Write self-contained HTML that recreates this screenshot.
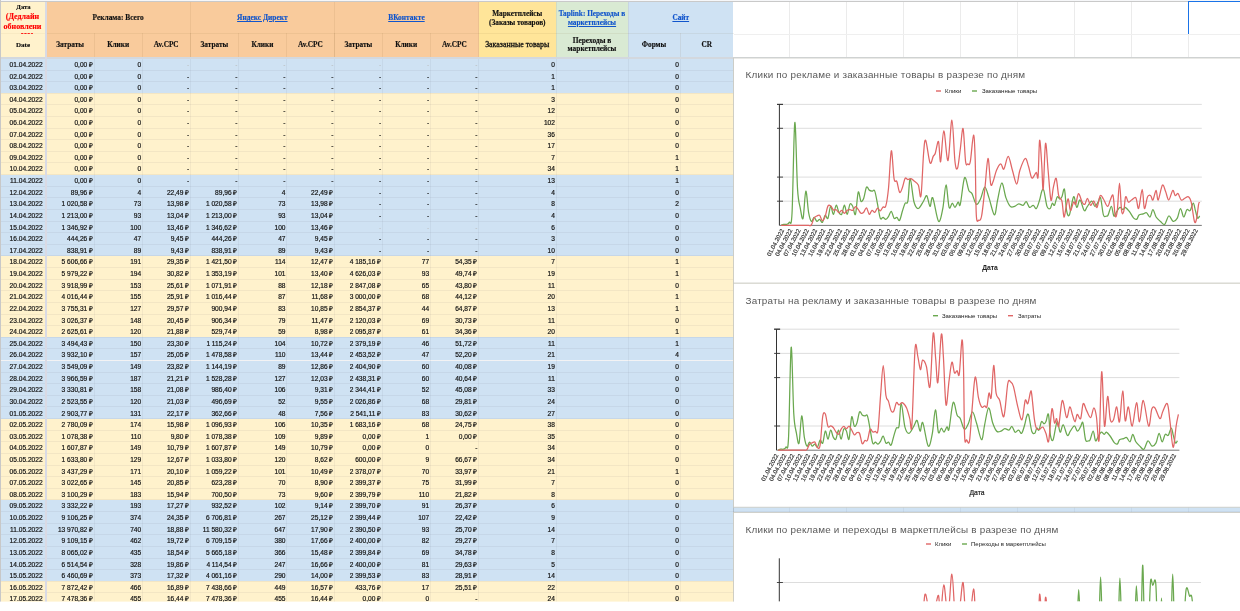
<!DOCTYPE html>
<html><head><meta charset="utf-8"><style>
html,body{margin:0;padding:0;}
body{width:1240px;height:611px;overflow:hidden;position:relative;background:#fff;font-family:'Liberation Sans',sans-serif;}
#w{position:absolute;left:0;top:0;width:1240px;height:611px;will-change:transform;}
#w>div{position:absolute;}
.t{font-family:"Liberation Sans",sans-serif;font-size:6.6px;color:#111;-webkit-text-stroke:0.18px #111;white-space:nowrap;text-align:right;line-height:8px}
</style></head><body><div id="w">
<div style="left:0.00px;top:0.00px;width:1240.00px;height:1.20px;background:#f6f7f9"></div><div style="left:0.00px;top:1.10px;width:1240.00px;height:1.00px;background:rgba(90,90,90,0.33)"></div><div style="left:1.00px;top:2.00px;width:45.00px;height:54.60px;background:#fff2cc"></div><div style="left:46.00px;top:2.00px;width:432.50px;height:54.60px;background:#f9cb9c"></div><div style="left:478.50px;top:2.00px;width:77.50px;height:54.60px;background:#ffe599"></div><div style="left:556.00px;top:2.00px;width:72.00px;height:54.60px;background:#d9ead3"></div><div style="left:628.00px;top:2.00px;width:104.80px;height:54.60px;background:#cfe2f3"></div><div style="left:93.60px;top:33.00px;width:1.00px;height:23.60px;background:rgba(120,90,40,0.09)"></div><div style="left:141.70px;top:33.00px;width:1.00px;height:23.60px;background:rgba(120,90,40,0.09)"></div><div style="left:189.80px;top:33.00px;width:1.00px;height:23.60px;background:rgba(120,90,40,0.09)"></div><div style="left:237.90px;top:33.00px;width:1.00px;height:23.60px;background:rgba(120,90,40,0.09)"></div><div style="left:286.00px;top:33.00px;width:1.00px;height:23.60px;background:rgba(120,90,40,0.09)"></div><div style="left:333.90px;top:33.00px;width:1.00px;height:23.60px;background:rgba(120,90,40,0.09)"></div><div style="left:381.70px;top:33.00px;width:1.00px;height:23.60px;background:rgba(120,90,40,0.09)"></div><div style="left:429.70px;top:33.00px;width:1.00px;height:23.60px;background:rgba(120,90,40,0.09)"></div><div style="left:189.80px;top:2.00px;width:1.00px;height:54.60px;background:rgba(120,90,40,0.09)"></div><div style="left:333.90px;top:2.00px;width:1.00px;height:54.60px;background:rgba(120,90,40,0.09)"></div><div style="left:478.00px;top:2.00px;width:1.00px;height:54.60px;background:rgba(120,90,40,0.09)"></div><div style="left:555.50px;top:2.00px;width:1.00px;height:54.60px;background:rgba(120,90,40,0.09)"></div><div style="left:627.50px;top:2.00px;width:1.00px;height:54.60px;background:rgba(120,90,40,0.09)"></div><div style="left:679.50px;top:33.00px;width:1.00px;height:23.60px;background:rgba(120,90,40,0.09)"></div><div style="left:46.00px;top:33.00px;width:687.50px;height:0.70px;background:rgba(120,90,40,0.08)"></div><div style="left:1.00px;top:33.00px;width:45.00px;height:0.70px;background:rgba(120,90,40,0.05)"></div><div style="left:788.50px;top:2.00px;width:1.00px;height:55.00px;background:#ebebeb"></div><div style="left:845.50px;top:2.00px;width:1.00px;height:55.00px;background:#ebebeb"></div><div style="left:902.50px;top:2.00px;width:1.00px;height:55.00px;background:#ebebeb"></div><div style="left:959.50px;top:2.00px;width:1.00px;height:55.00px;background:#ebebeb"></div><div style="left:1016.50px;top:2.00px;width:1.00px;height:55.00px;background:#ebebeb"></div><div style="left:1073.50px;top:2.00px;width:1.00px;height:55.00px;background:#ebebeb"></div><div style="left:1130.50px;top:2.00px;width:1.00px;height:55.00px;background:#ebebeb"></div><div style="left:1187.50px;top:2.00px;width:1.00px;height:55.00px;background:#ebebeb"></div><div style="left:733.50px;top:33.50px;width:507.00px;height:0.80px;background:#efefef"></div><div style="left:1188.00px;top:0.60px;width:60.00px;height:1.40px;background:#1a73e8"></div><div style="left:1188.00px;top:0.60px;width:1.40px;height:33.40px;background:#1a73e8"></div><div style="left:0.00px;top:56.60px;width:1240.00px;height:2.00px;background:#d3d8de"></div><div style="left:1.00px;top:58.50px;width:732.50px;height:11.50px;background:#cfe2f3"></div><div style="left:733.50px;top:58.50px;width:506.50px;height:11.50px;background:#cfe2f3"></div><div style="left:1.00px;top:70.00px;width:732.50px;height:11.62px;background:#cfe2f3"></div><div style="left:733.50px;top:70.00px;width:506.50px;height:11.62px;background:#cfe2f3"></div><div style="left:1.00px;top:81.62px;width:732.50px;height:11.62px;background:#cfe2f3"></div><div style="left:733.50px;top:81.62px;width:506.50px;height:11.62px;background:#cfe2f3"></div><div style="left:1.00px;top:93.24px;width:732.50px;height:11.62px;background:#fff2cc"></div><div style="left:733.50px;top:93.24px;width:506.50px;height:11.62px;background:#fff2cc"></div><div style="left:1.00px;top:104.86px;width:732.50px;height:11.62px;background:#fff2cc"></div><div style="left:733.50px;top:104.86px;width:506.50px;height:11.62px;background:#fff2cc"></div><div style="left:1.00px;top:116.48px;width:732.50px;height:11.62px;background:#fff2cc"></div><div style="left:733.50px;top:116.48px;width:506.50px;height:11.62px;background:#fff2cc"></div><div style="left:1.00px;top:128.10px;width:732.50px;height:11.62px;background:#fff2cc"></div><div style="left:733.50px;top:128.10px;width:506.50px;height:11.62px;background:#fff2cc"></div><div style="left:1.00px;top:139.72px;width:732.50px;height:11.62px;background:#fff2cc"></div><div style="left:733.50px;top:139.72px;width:506.50px;height:11.62px;background:#fff2cc"></div><div style="left:1.00px;top:151.34px;width:732.50px;height:11.62px;background:#fff2cc"></div><div style="left:733.50px;top:151.34px;width:506.50px;height:11.62px;background:#fff2cc"></div><div style="left:1.00px;top:162.96px;width:732.50px;height:11.62px;background:#fff2cc"></div><div style="left:733.50px;top:162.96px;width:506.50px;height:11.62px;background:#fff2cc"></div><div style="left:1.00px;top:174.58px;width:732.50px;height:11.62px;background:#cfe2f3"></div><div style="left:733.50px;top:174.58px;width:506.50px;height:11.62px;background:#cfe2f3"></div><div style="left:1.00px;top:186.20px;width:732.50px;height:11.62px;background:#cfe2f3"></div><div style="left:733.50px;top:186.20px;width:506.50px;height:11.62px;background:#cfe2f3"></div><div style="left:1.00px;top:197.82px;width:732.50px;height:11.62px;background:#cfe2f3"></div><div style="left:733.50px;top:197.82px;width:506.50px;height:11.62px;background:#cfe2f3"></div><div style="left:1.00px;top:209.44px;width:732.50px;height:11.62px;background:#cfe2f3"></div><div style="left:733.50px;top:209.44px;width:506.50px;height:11.62px;background:#cfe2f3"></div><div style="left:1.00px;top:221.06px;width:732.50px;height:11.62px;background:#cfe2f3"></div><div style="left:733.50px;top:221.06px;width:506.50px;height:11.62px;background:#cfe2f3"></div><div style="left:1.00px;top:232.68px;width:732.50px;height:11.62px;background:#cfe2f3"></div><div style="left:733.50px;top:232.68px;width:506.50px;height:11.62px;background:#cfe2f3"></div><div style="left:1.00px;top:244.30px;width:732.50px;height:11.62px;background:#cfe2f3"></div><div style="left:733.50px;top:244.30px;width:506.50px;height:11.62px;background:#cfe2f3"></div><div style="left:1.00px;top:255.92px;width:732.50px;height:11.62px;background:#fff2cc"></div><div style="left:733.50px;top:255.92px;width:506.50px;height:11.62px;background:#fff2cc"></div><div style="left:1.00px;top:267.54px;width:732.50px;height:11.62px;background:#fff2cc"></div><div style="left:733.50px;top:267.54px;width:506.50px;height:11.62px;background:#fff2cc"></div><div style="left:1.00px;top:279.16px;width:732.50px;height:11.62px;background:#fff2cc"></div><div style="left:733.50px;top:279.16px;width:506.50px;height:11.62px;background:#fff2cc"></div><div style="left:1.00px;top:290.78px;width:732.50px;height:11.62px;background:#fff2cc"></div><div style="left:733.50px;top:290.78px;width:506.50px;height:11.62px;background:#fff2cc"></div><div style="left:1.00px;top:302.40px;width:732.50px;height:11.62px;background:#fff2cc"></div><div style="left:733.50px;top:302.40px;width:506.50px;height:11.62px;background:#fff2cc"></div><div style="left:1.00px;top:314.02px;width:732.50px;height:11.62px;background:#fff2cc"></div><div style="left:733.50px;top:314.02px;width:506.50px;height:11.62px;background:#fff2cc"></div><div style="left:1.00px;top:325.64px;width:732.50px;height:11.62px;background:#fff2cc"></div><div style="left:733.50px;top:325.64px;width:506.50px;height:11.62px;background:#fff2cc"></div><div style="left:1.00px;top:337.26px;width:732.50px;height:11.62px;background:#cfe2f3"></div><div style="left:733.50px;top:337.26px;width:506.50px;height:11.62px;background:#cfe2f3"></div><div style="left:1.00px;top:348.88px;width:732.50px;height:11.62px;background:#cfe2f3"></div><div style="left:733.50px;top:348.88px;width:506.50px;height:11.62px;background:#cfe2f3"></div><div style="left:1.00px;top:360.50px;width:732.50px;height:11.62px;background:#cfe2f3"></div><div style="left:733.50px;top:360.50px;width:506.50px;height:11.62px;background:#cfe2f3"></div><div style="left:1.00px;top:372.12px;width:732.50px;height:11.62px;background:#cfe2f3"></div><div style="left:733.50px;top:372.12px;width:506.50px;height:11.62px;background:#cfe2f3"></div><div style="left:1.00px;top:383.74px;width:732.50px;height:11.62px;background:#cfe2f3"></div><div style="left:733.50px;top:383.74px;width:506.50px;height:11.62px;background:#cfe2f3"></div><div style="left:1.00px;top:395.36px;width:732.50px;height:11.62px;background:#cfe2f3"></div><div style="left:733.50px;top:395.36px;width:506.50px;height:11.62px;background:#cfe2f3"></div><div style="left:1.00px;top:406.98px;width:732.50px;height:11.62px;background:#cfe2f3"></div><div style="left:733.50px;top:406.98px;width:506.50px;height:11.62px;background:#cfe2f3"></div><div style="left:1.00px;top:418.60px;width:732.50px;height:11.62px;background:#fff2cc"></div><div style="left:733.50px;top:418.60px;width:506.50px;height:11.62px;background:#fff2cc"></div><div style="left:1.00px;top:430.22px;width:732.50px;height:11.62px;background:#fff2cc"></div><div style="left:733.50px;top:430.22px;width:506.50px;height:11.62px;background:#fff2cc"></div><div style="left:1.00px;top:441.84px;width:732.50px;height:11.62px;background:#fff2cc"></div><div style="left:733.50px;top:441.84px;width:506.50px;height:11.62px;background:#fff2cc"></div><div style="left:1.00px;top:453.46px;width:732.50px;height:11.62px;background:#fff2cc"></div><div style="left:733.50px;top:453.46px;width:506.50px;height:11.62px;background:#fff2cc"></div><div style="left:1.00px;top:465.08px;width:732.50px;height:11.62px;background:#fff2cc"></div><div style="left:733.50px;top:465.08px;width:506.50px;height:11.62px;background:#fff2cc"></div><div style="left:1.00px;top:476.70px;width:732.50px;height:11.62px;background:#fff2cc"></div><div style="left:733.50px;top:476.70px;width:506.50px;height:11.62px;background:#fff2cc"></div><div style="left:1.00px;top:488.32px;width:732.50px;height:11.62px;background:#fff2cc"></div><div style="left:733.50px;top:488.32px;width:506.50px;height:11.62px;background:#fff2cc"></div><div style="left:1.00px;top:499.94px;width:732.50px;height:11.62px;background:#cfe2f3"></div><div style="left:733.50px;top:499.94px;width:506.50px;height:11.62px;background:#cfe2f3"></div><div style="left:1.00px;top:511.56px;width:732.50px;height:11.62px;background:#cfe2f3"></div><div style="left:733.50px;top:511.56px;width:506.50px;height:11.62px;background:#cfe2f3"></div><div style="left:1.00px;top:523.18px;width:732.50px;height:11.62px;background:#cfe2f3"></div><div style="left:733.50px;top:523.18px;width:506.50px;height:11.62px;background:#cfe2f3"></div><div style="left:1.00px;top:534.80px;width:732.50px;height:11.62px;background:#cfe2f3"></div><div style="left:733.50px;top:534.80px;width:506.50px;height:11.62px;background:#cfe2f3"></div><div style="left:1.00px;top:546.42px;width:732.50px;height:11.62px;background:#cfe2f3"></div><div style="left:733.50px;top:546.42px;width:506.50px;height:11.62px;background:#cfe2f3"></div><div style="left:1.00px;top:558.04px;width:732.50px;height:11.62px;background:#cfe2f3"></div><div style="left:733.50px;top:558.04px;width:506.50px;height:11.62px;background:#cfe2f3"></div><div style="left:1.00px;top:569.66px;width:732.50px;height:11.62px;background:#cfe2f3"></div><div style="left:733.50px;top:569.66px;width:506.50px;height:11.62px;background:#cfe2f3"></div><div style="left:1.00px;top:581.28px;width:732.50px;height:11.62px;background:#fff2cc"></div><div style="left:733.50px;top:581.28px;width:506.50px;height:11.62px;background:#fff2cc"></div><div style="left:1.00px;top:592.90px;width:732.50px;height:11.62px;background:#fff2cc"></div><div style="left:733.50px;top:592.90px;width:506.50px;height:11.62px;background:#fff2cc"></div><div style="left:1.00px;top:70.00px;width:1239.00px;height:1.00px;background:rgba(60,70,80,0.062)"></div><div style="left:1.00px;top:81.00px;width:1239.00px;height:1.00px;background:rgba(60,70,80,0.062)"></div><div style="left:1.00px;top:93.00px;width:1239.00px;height:1.00px;background:rgba(60,70,80,0.062)"></div><div style="left:1.00px;top:104.00px;width:1239.00px;height:1.00px;background:rgba(60,70,80,0.062)"></div><div style="left:1.00px;top:116.00px;width:1239.00px;height:1.00px;background:rgba(60,70,80,0.062)"></div><div style="left:1.00px;top:128.00px;width:1239.00px;height:1.00px;background:rgba(60,70,80,0.062)"></div><div style="left:1.00px;top:139.00px;width:1239.00px;height:1.00px;background:rgba(60,70,80,0.062)"></div><div style="left:1.00px;top:151.00px;width:1239.00px;height:1.00px;background:rgba(60,70,80,0.062)"></div><div style="left:1.00px;top:162.00px;width:1239.00px;height:1.00px;background:rgba(60,70,80,0.062)"></div><div style="left:1.00px;top:174.00px;width:1239.00px;height:1.00px;background:rgba(60,70,80,0.062)"></div><div style="left:1.00px;top:186.00px;width:1239.00px;height:1.00px;background:rgba(60,70,80,0.062)"></div><div style="left:1.00px;top:197.00px;width:1239.00px;height:1.00px;background:rgba(60,70,80,0.062)"></div><div style="left:1.00px;top:209.00px;width:1239.00px;height:1.00px;background:rgba(60,70,80,0.062)"></div><div style="left:1.00px;top:221.00px;width:1239.00px;height:1.00px;background:rgba(60,70,80,0.062)"></div><div style="left:1.00px;top:232.00px;width:1239.00px;height:1.00px;background:rgba(60,70,80,0.062)"></div><div style="left:1.00px;top:244.00px;width:1239.00px;height:1.00px;background:rgba(60,70,80,0.062)"></div><div style="left:1.00px;top:255.00px;width:1239.00px;height:1.00px;background:rgba(60,70,80,0.062)"></div><div style="left:1.00px;top:267.00px;width:1239.00px;height:1.00px;background:rgba(60,70,80,0.062)"></div><div style="left:1.00px;top:279.00px;width:1239.00px;height:1.00px;background:rgba(60,70,80,0.062)"></div><div style="left:1.00px;top:290.00px;width:1239.00px;height:1.00px;background:rgba(60,70,80,0.062)"></div><div style="left:1.00px;top:302.00px;width:1239.00px;height:1.00px;background:rgba(60,70,80,0.062)"></div><div style="left:1.00px;top:314.00px;width:1239.00px;height:1.00px;background:rgba(60,70,80,0.062)"></div><div style="left:1.00px;top:325.00px;width:1239.00px;height:1.00px;background:rgba(60,70,80,0.062)"></div><div style="left:1.00px;top:337.00px;width:1239.00px;height:1.00px;background:rgba(60,70,80,0.062)"></div><div style="left:1.00px;top:348.00px;width:1239.00px;height:1.00px;background:rgba(60,70,80,0.062)"></div><div style="left:1.00px;top:360.00px;width:1239.00px;height:1.00px;background:rgba(60,70,80,0.062)"></div><div style="left:1.00px;top:372.00px;width:1239.00px;height:1.00px;background:rgba(60,70,80,0.062)"></div><div style="left:1.00px;top:383.00px;width:1239.00px;height:1.00px;background:rgba(60,70,80,0.062)"></div><div style="left:1.00px;top:395.00px;width:1239.00px;height:1.00px;background:rgba(60,70,80,0.062)"></div><div style="left:1.00px;top:406.00px;width:1239.00px;height:1.00px;background:rgba(60,70,80,0.062)"></div><div style="left:1.00px;top:418.00px;width:1239.00px;height:1.00px;background:rgba(60,70,80,0.062)"></div><div style="left:1.00px;top:430.00px;width:1239.00px;height:1.00px;background:rgba(60,70,80,0.062)"></div><div style="left:1.00px;top:441.00px;width:1239.00px;height:1.00px;background:rgba(60,70,80,0.062)"></div><div style="left:1.00px;top:453.00px;width:1239.00px;height:1.00px;background:rgba(60,70,80,0.062)"></div><div style="left:1.00px;top:465.00px;width:1239.00px;height:1.00px;background:rgba(60,70,80,0.062)"></div><div style="left:1.00px;top:476.00px;width:1239.00px;height:1.00px;background:rgba(60,70,80,0.062)"></div><div style="left:1.00px;top:488.00px;width:1239.00px;height:1.00px;background:rgba(60,70,80,0.062)"></div><div style="left:1.00px;top:499.00px;width:1239.00px;height:1.00px;background:rgba(60,70,80,0.062)"></div><div style="left:1.00px;top:511.00px;width:1239.00px;height:1.00px;background:rgba(60,70,80,0.062)"></div><div style="left:1.00px;top:523.00px;width:1239.00px;height:1.00px;background:rgba(60,70,80,0.062)"></div><div style="left:1.00px;top:534.00px;width:1239.00px;height:1.00px;background:rgba(60,70,80,0.062)"></div><div style="left:1.00px;top:546.00px;width:1239.00px;height:1.00px;background:rgba(60,70,80,0.062)"></div><div style="left:1.00px;top:558.00px;width:1239.00px;height:1.00px;background:rgba(60,70,80,0.062)"></div><div style="left:1.00px;top:569.00px;width:1239.00px;height:1.00px;background:rgba(60,70,80,0.062)"></div><div style="left:1.00px;top:581.00px;width:1239.00px;height:1.00px;background:rgba(60,70,80,0.062)"></div><div style="left:1.00px;top:592.00px;width:1239.00px;height:1.00px;background:rgba(60,70,80,0.062)"></div><div style="left:1.00px;top:604.00px;width:1239.00px;height:1.00px;background:rgba(60,70,80,0.062)"></div><div style="left:94.00px;top:58.50px;width:1.00px;height:543.10px;background:rgba(60,70,80,0.06)"></div><div style="left:142.00px;top:58.50px;width:1.00px;height:543.10px;background:rgba(60,70,80,0.06)"></div><div style="left:190.00px;top:58.50px;width:1.00px;height:543.10px;background:rgba(60,70,80,0.06)"></div><div style="left:238.00px;top:58.50px;width:1.00px;height:543.10px;background:rgba(60,70,80,0.06)"></div><div style="left:286.00px;top:58.50px;width:1.00px;height:543.10px;background:rgba(60,70,80,0.06)"></div><div style="left:334.00px;top:58.50px;width:1.00px;height:543.10px;background:rgba(60,70,80,0.06)"></div><div style="left:382.00px;top:58.50px;width:1.00px;height:543.10px;background:rgba(60,70,80,0.06)"></div><div style="left:430.00px;top:58.50px;width:1.00px;height:543.10px;background:rgba(60,70,80,0.06)"></div><div style="left:478.00px;top:58.50px;width:1.00px;height:543.10px;background:rgba(60,70,80,0.06)"></div><div style="left:556.00px;top:58.50px;width:1.00px;height:543.10px;background:rgba(60,70,80,0.06)"></div><div style="left:628.00px;top:58.50px;width:1.00px;height:543.10px;background:rgba(60,70,80,0.06)"></div><div style="left:680.00px;top:58.50px;width:1.00px;height:543.10px;background:rgba(60,70,80,0.06)"></div><div style="left:789.00px;top:58.50px;width:1.00px;height:543.10px;background:rgba(60,70,80,0.06)"></div><div style="left:846.00px;top:58.50px;width:1.00px;height:543.10px;background:rgba(60,70,80,0.06)"></div><div style="left:903.00px;top:58.50px;width:1.00px;height:543.10px;background:rgba(60,70,80,0.06)"></div><div style="left:960.00px;top:58.50px;width:1.00px;height:543.10px;background:rgba(60,70,80,0.06)"></div><div style="left:1017.00px;top:58.50px;width:1.00px;height:543.10px;background:rgba(60,70,80,0.06)"></div><div style="left:1074.00px;top:58.50px;width:1.00px;height:543.10px;background:rgba(60,70,80,0.06)"></div><div style="left:1131.00px;top:58.50px;width:1.00px;height:543.10px;background:rgba(60,70,80,0.06)"></div><div style="left:1188.00px;top:58.50px;width:1.00px;height:543.10px;background:rgba(60,70,80,0.06)"></div><div style="left:45.00px;top:2.00px;width:2.00px;height:599.60px;background:#d9dae4"></div><div style="left:0.00px;top:0.00px;width:1.00px;height:601.60px;background:#c8c8c8"></div><div style="left:732.80px;top:58.50px;width:1.00px;height:543.00px;background:rgba(90,90,90,0.25)"></div><div class="t" style="left:-17.40px;top:60.90px;width:60px;">01.04.2022</div><div class="t" style="left:33.10px;top:60.90px;width:60px;">0,00 ₽</div><div class="t" style="left:81.20px;top:60.90px;width:60px;">0</div><div class="t" style="left:129.30px;top:60.90px;width:60px;color:#b9b9b9;-webkit-text-stroke:0">-</div><div class="t" style="left:177.40px;top:60.90px;width:60px;color:#b9b9b9;-webkit-text-stroke:0">-</div><div class="t" style="left:225.50px;top:60.90px;width:60px;color:#b9b9b9;-webkit-text-stroke:0">-</div><div class="t" style="left:273.40px;top:60.90px;width:60px;color:#b9b9b9;-webkit-text-stroke:0">-</div><div class="t" style="left:321.20px;top:60.90px;width:60px;color:#b9b9b9;-webkit-text-stroke:0">-</div><div class="t" style="left:369.20px;top:60.90px;width:60px;color:#b9b9b9;-webkit-text-stroke:0">-</div><div class="t" style="left:417.50px;top:60.90px;width:60px;color:#b9b9b9;-webkit-text-stroke:0">-</div><div class="t" style="left:494.90px;top:60.90px;width:60px;">0</div><div class="t" style="left:619.00px;top:60.90px;width:60px;">0</div><div class="t" style="left:-17.40px;top:72.52px;width:60px;">02.04.2022</div><div class="t" style="left:33.10px;top:72.52px;width:60px;">0,00 ₽</div><div class="t" style="left:81.20px;top:72.52px;width:60px;">0</div><div class="t" style="left:129.30px;top:72.52px;width:60px;">-</div><div class="t" style="left:177.40px;top:72.52px;width:60px;">-</div><div class="t" style="left:225.50px;top:72.52px;width:60px;">-</div><div class="t" style="left:273.40px;top:72.52px;width:60px;">-</div><div class="t" style="left:321.20px;top:72.52px;width:60px;">-</div><div class="t" style="left:369.20px;top:72.52px;width:60px;">-</div><div class="t" style="left:417.50px;top:72.52px;width:60px;">-</div><div class="t" style="left:494.90px;top:72.52px;width:60px;">1</div><div class="t" style="left:619.00px;top:72.52px;width:60px;">0</div><div class="t" style="left:-17.40px;top:84.14px;width:60px;">03.04.2022</div><div class="t" style="left:33.10px;top:84.14px;width:60px;">0,00 ₽</div><div class="t" style="left:81.20px;top:84.14px;width:60px;">0</div><div class="t" style="left:129.30px;top:84.14px;width:60px;">-</div><div class="t" style="left:177.40px;top:84.14px;width:60px;">-</div><div class="t" style="left:225.50px;top:84.14px;width:60px;">-</div><div class="t" style="left:273.40px;top:84.14px;width:60px;">-</div><div class="t" style="left:321.20px;top:84.14px;width:60px;">-</div><div class="t" style="left:369.20px;top:84.14px;width:60px;">-</div><div class="t" style="left:417.50px;top:84.14px;width:60px;">-</div><div class="t" style="left:494.90px;top:84.14px;width:60px;">1</div><div class="t" style="left:619.00px;top:84.14px;width:60px;">0</div><div class="t" style="left:-17.40px;top:95.76px;width:60px;">04.04.2022</div><div class="t" style="left:33.10px;top:95.76px;width:60px;">0,00 ₽</div><div class="t" style="left:81.20px;top:95.76px;width:60px;">0</div><div class="t" style="left:129.30px;top:95.76px;width:60px;">-</div><div class="t" style="left:177.40px;top:95.76px;width:60px;">-</div><div class="t" style="left:225.50px;top:95.76px;width:60px;">-</div><div class="t" style="left:273.40px;top:95.76px;width:60px;">-</div><div class="t" style="left:321.20px;top:95.76px;width:60px;">-</div><div class="t" style="left:369.20px;top:95.76px;width:60px;">-</div><div class="t" style="left:417.50px;top:95.76px;width:60px;">-</div><div class="t" style="left:494.90px;top:95.76px;width:60px;">3</div><div class="t" style="left:619.00px;top:95.76px;width:60px;">0</div><div class="t" style="left:-17.40px;top:107.38px;width:60px;">05.04.2022</div><div class="t" style="left:33.10px;top:107.38px;width:60px;">0,00 ₽</div><div class="t" style="left:81.20px;top:107.38px;width:60px;">0</div><div class="t" style="left:129.30px;top:107.38px;width:60px;">-</div><div class="t" style="left:177.40px;top:107.38px;width:60px;">-</div><div class="t" style="left:225.50px;top:107.38px;width:60px;">-</div><div class="t" style="left:273.40px;top:107.38px;width:60px;">-</div><div class="t" style="left:321.20px;top:107.38px;width:60px;">-</div><div class="t" style="left:369.20px;top:107.38px;width:60px;">-</div><div class="t" style="left:417.50px;top:107.38px;width:60px;">-</div><div class="t" style="left:494.90px;top:107.38px;width:60px;">12</div><div class="t" style="left:619.00px;top:107.38px;width:60px;">0</div><div class="t" style="left:-17.40px;top:119.00px;width:60px;">06.04.2022</div><div class="t" style="left:33.10px;top:119.00px;width:60px;">0,00 ₽</div><div class="t" style="left:81.20px;top:119.00px;width:60px;">0</div><div class="t" style="left:129.30px;top:119.00px;width:60px;">-</div><div class="t" style="left:177.40px;top:119.00px;width:60px;">-</div><div class="t" style="left:225.50px;top:119.00px;width:60px;">-</div><div class="t" style="left:273.40px;top:119.00px;width:60px;">-</div><div class="t" style="left:321.20px;top:119.00px;width:60px;">-</div><div class="t" style="left:369.20px;top:119.00px;width:60px;">-</div><div class="t" style="left:417.50px;top:119.00px;width:60px;">-</div><div class="t" style="left:494.90px;top:119.00px;width:60px;">102</div><div class="t" style="left:619.00px;top:119.00px;width:60px;">0</div><div class="t" style="left:-17.40px;top:130.62px;width:60px;">07.04.2022</div><div class="t" style="left:33.10px;top:130.62px;width:60px;">0,00 ₽</div><div class="t" style="left:81.20px;top:130.62px;width:60px;">0</div><div class="t" style="left:129.30px;top:130.62px;width:60px;">-</div><div class="t" style="left:177.40px;top:130.62px;width:60px;">-</div><div class="t" style="left:225.50px;top:130.62px;width:60px;">-</div><div class="t" style="left:273.40px;top:130.62px;width:60px;">-</div><div class="t" style="left:321.20px;top:130.62px;width:60px;">-</div><div class="t" style="left:369.20px;top:130.62px;width:60px;">-</div><div class="t" style="left:417.50px;top:130.62px;width:60px;">-</div><div class="t" style="left:494.90px;top:130.62px;width:60px;">36</div><div class="t" style="left:619.00px;top:130.62px;width:60px;">0</div><div class="t" style="left:-17.40px;top:142.24px;width:60px;">08.04.2022</div><div class="t" style="left:33.10px;top:142.24px;width:60px;">0,00 ₽</div><div class="t" style="left:81.20px;top:142.24px;width:60px;">0</div><div class="t" style="left:129.30px;top:142.24px;width:60px;">-</div><div class="t" style="left:177.40px;top:142.24px;width:60px;">-</div><div class="t" style="left:225.50px;top:142.24px;width:60px;">-</div><div class="t" style="left:273.40px;top:142.24px;width:60px;">-</div><div class="t" style="left:321.20px;top:142.24px;width:60px;">-</div><div class="t" style="left:369.20px;top:142.24px;width:60px;">-</div><div class="t" style="left:417.50px;top:142.24px;width:60px;">-</div><div class="t" style="left:494.90px;top:142.24px;width:60px;">17</div><div class="t" style="left:619.00px;top:142.24px;width:60px;">0</div><div class="t" style="left:-17.40px;top:153.86px;width:60px;">09.04.2022</div><div class="t" style="left:33.10px;top:153.86px;width:60px;">0,00 ₽</div><div class="t" style="left:81.20px;top:153.86px;width:60px;">0</div><div class="t" style="left:129.30px;top:153.86px;width:60px;">-</div><div class="t" style="left:177.40px;top:153.86px;width:60px;">-</div><div class="t" style="left:225.50px;top:153.86px;width:60px;">-</div><div class="t" style="left:273.40px;top:153.86px;width:60px;">-</div><div class="t" style="left:321.20px;top:153.86px;width:60px;">-</div><div class="t" style="left:369.20px;top:153.86px;width:60px;">-</div><div class="t" style="left:417.50px;top:153.86px;width:60px;">-</div><div class="t" style="left:494.90px;top:153.86px;width:60px;">7</div><div class="t" style="left:619.00px;top:153.86px;width:60px;">1</div><div class="t" style="left:-17.40px;top:165.48px;width:60px;">10.04.2022</div><div class="t" style="left:33.10px;top:165.48px;width:60px;">0,00 ₽</div><div class="t" style="left:81.20px;top:165.48px;width:60px;">0</div><div class="t" style="left:129.30px;top:165.48px;width:60px;">-</div><div class="t" style="left:177.40px;top:165.48px;width:60px;">-</div><div class="t" style="left:225.50px;top:165.48px;width:60px;">-</div><div class="t" style="left:273.40px;top:165.48px;width:60px;">-</div><div class="t" style="left:321.20px;top:165.48px;width:60px;">-</div><div class="t" style="left:369.20px;top:165.48px;width:60px;">-</div><div class="t" style="left:417.50px;top:165.48px;width:60px;">-</div><div class="t" style="left:494.90px;top:165.48px;width:60px;">34</div><div class="t" style="left:619.00px;top:165.48px;width:60px;">1</div><div class="t" style="left:-17.40px;top:177.10px;width:60px;">11.04.2022</div><div class="t" style="left:33.10px;top:177.10px;width:60px;">0,00 ₽</div><div class="t" style="left:81.20px;top:177.10px;width:60px;">0</div><div class="t" style="left:129.30px;top:177.10px;width:60px;">-</div><div class="t" style="left:177.40px;top:177.10px;width:60px;">-</div><div class="t" style="left:225.50px;top:177.10px;width:60px;">-</div><div class="t" style="left:273.40px;top:177.10px;width:60px;">-</div><div class="t" style="left:321.20px;top:177.10px;width:60px;">-</div><div class="t" style="left:369.20px;top:177.10px;width:60px;">-</div><div class="t" style="left:417.50px;top:177.10px;width:60px;">-</div><div class="t" style="left:494.90px;top:177.10px;width:60px;">13</div><div class="t" style="left:619.00px;top:177.10px;width:60px;">1</div><div class="t" style="left:-17.40px;top:188.72px;width:60px;">12.04.2022</div><div class="t" style="left:33.10px;top:188.72px;width:60px;">89,96 ₽</div><div class="t" style="left:81.20px;top:188.72px;width:60px;">4</div><div class="t" style="left:129.30px;top:188.72px;width:60px;">22,49 ₽</div><div class="t" style="left:177.40px;top:188.72px;width:60px;">89,96 ₽</div><div class="t" style="left:225.50px;top:188.72px;width:60px;">4</div><div class="t" style="left:273.40px;top:188.72px;width:60px;">22,49 ₽</div><div class="t" style="left:321.20px;top:188.72px;width:60px;">-</div><div class="t" style="left:369.20px;top:188.72px;width:60px;">-</div><div class="t" style="left:417.50px;top:188.72px;width:60px;">-</div><div class="t" style="left:494.90px;top:188.72px;width:60px;">4</div><div class="t" style="left:619.00px;top:188.72px;width:60px;">0</div><div class="t" style="left:-17.40px;top:200.34px;width:60px;">13.04.2022</div><div class="t" style="left:33.10px;top:200.34px;width:60px;">1 020,58 ₽</div><div class="t" style="left:81.20px;top:200.34px;width:60px;">73</div><div class="t" style="left:129.30px;top:200.34px;width:60px;">13,98 ₽</div><div class="t" style="left:177.40px;top:200.34px;width:60px;">1 020,58 ₽</div><div class="t" style="left:225.50px;top:200.34px;width:60px;">73</div><div class="t" style="left:273.40px;top:200.34px;width:60px;">13,98 ₽</div><div class="t" style="left:321.20px;top:200.34px;width:60px;">-</div><div class="t" style="left:369.20px;top:200.34px;width:60px;">-</div><div class="t" style="left:417.50px;top:200.34px;width:60px;">-</div><div class="t" style="left:494.90px;top:200.34px;width:60px;">8</div><div class="t" style="left:619.00px;top:200.34px;width:60px;">2</div><div class="t" style="left:-17.40px;top:211.96px;width:60px;">14.04.2022</div><div class="t" style="left:33.10px;top:211.96px;width:60px;">1 213,00 ₽</div><div class="t" style="left:81.20px;top:211.96px;width:60px;">93</div><div class="t" style="left:129.30px;top:211.96px;width:60px;">13,04 ₽</div><div class="t" style="left:177.40px;top:211.96px;width:60px;">1 213,00 ₽</div><div class="t" style="left:225.50px;top:211.96px;width:60px;">93</div><div class="t" style="left:273.40px;top:211.96px;width:60px;">13,04 ₽</div><div class="t" style="left:321.20px;top:211.96px;width:60px;">-</div><div class="t" style="left:369.20px;top:211.96px;width:60px;">-</div><div class="t" style="left:417.50px;top:211.96px;width:60px;">-</div><div class="t" style="left:494.90px;top:211.96px;width:60px;">4</div><div class="t" style="left:619.00px;top:211.96px;width:60px;">0</div><div class="t" style="left:-17.40px;top:223.58px;width:60px;">15.04.2022</div><div class="t" style="left:33.10px;top:223.58px;width:60px;">1 346,92 ₽</div><div class="t" style="left:81.20px;top:223.58px;width:60px;">100</div><div class="t" style="left:129.30px;top:223.58px;width:60px;">13,46 ₽</div><div class="t" style="left:177.40px;top:223.58px;width:60px;">1 346,62 ₽</div><div class="t" style="left:225.50px;top:223.58px;width:60px;">100</div><div class="t" style="left:273.40px;top:223.58px;width:60px;">13,46 ₽</div><div class="t" style="left:321.20px;top:223.58px;width:60px;color:#b9b9b9;-webkit-text-stroke:0">-</div><div class="t" style="left:369.20px;top:223.58px;width:60px;color:#b9b9b9;-webkit-text-stroke:0">-</div><div class="t" style="left:417.50px;top:223.58px;width:60px;color:#b9b9b9;-webkit-text-stroke:0">-</div><div class="t" style="left:494.90px;top:223.58px;width:60px;">6</div><div class="t" style="left:619.00px;top:223.58px;width:60px;">0</div><div class="t" style="left:-17.40px;top:235.20px;width:60px;">16.04.2022</div><div class="t" style="left:33.10px;top:235.20px;width:60px;">444,26 ₽</div><div class="t" style="left:81.20px;top:235.20px;width:60px;">47</div><div class="t" style="left:129.30px;top:235.20px;width:60px;">9,45 ₽</div><div class="t" style="left:177.40px;top:235.20px;width:60px;">444,26 ₽</div><div class="t" style="left:225.50px;top:235.20px;width:60px;">47</div><div class="t" style="left:273.40px;top:235.20px;width:60px;">9,45 ₽</div><div class="t" style="left:321.20px;top:235.20px;width:60px;">-</div><div class="t" style="left:369.20px;top:235.20px;width:60px;">-</div><div class="t" style="left:417.50px;top:235.20px;width:60px;">-</div><div class="t" style="left:494.90px;top:235.20px;width:60px;">3</div><div class="t" style="left:619.00px;top:235.20px;width:60px;">0</div><div class="t" style="left:-17.40px;top:246.82px;width:60px;">17.04.2022</div><div class="t" style="left:33.10px;top:246.82px;width:60px;">838,91 ₽</div><div class="t" style="left:81.20px;top:246.82px;width:60px;">89</div><div class="t" style="left:129.30px;top:246.82px;width:60px;">9,43 ₽</div><div class="t" style="left:177.40px;top:246.82px;width:60px;">838,91 ₽</div><div class="t" style="left:225.50px;top:246.82px;width:60px;">89</div><div class="t" style="left:273.40px;top:246.82px;width:60px;">9,43 ₽</div><div class="t" style="left:321.20px;top:246.82px;width:60px;">-</div><div class="t" style="left:369.20px;top:246.82px;width:60px;">-</div><div class="t" style="left:417.50px;top:246.82px;width:60px;">-</div><div class="t" style="left:494.90px;top:246.82px;width:60px;">10</div><div class="t" style="left:619.00px;top:246.82px;width:60px;">0</div><div class="t" style="left:-17.40px;top:258.44px;width:60px;">18.04.2022</div><div class="t" style="left:33.10px;top:258.44px;width:60px;">5 606,66 ₽</div><div class="t" style="left:81.20px;top:258.44px;width:60px;">191</div><div class="t" style="left:129.30px;top:258.44px;width:60px;">29,35 ₽</div><div class="t" style="left:177.40px;top:258.44px;width:60px;">1 421,50 ₽</div><div class="t" style="left:225.50px;top:258.44px;width:60px;">114</div><div class="t" style="left:273.40px;top:258.44px;width:60px;">12,47 ₽</div><div class="t" style="left:321.20px;top:258.44px;width:60px;">4 185,16 ₽</div><div class="t" style="left:369.20px;top:258.44px;width:60px;">77</div><div class="t" style="left:417.50px;top:258.44px;width:60px;">54,35 ₽</div><div class="t" style="left:494.90px;top:258.44px;width:60px;">7</div><div class="t" style="left:619.00px;top:258.44px;width:60px;">1</div><div class="t" style="left:-17.40px;top:270.06px;width:60px;">19.04.2022</div><div class="t" style="left:33.10px;top:270.06px;width:60px;">5 979,22 ₽</div><div class="t" style="left:81.20px;top:270.06px;width:60px;">194</div><div class="t" style="left:129.30px;top:270.06px;width:60px;">30,82 ₽</div><div class="t" style="left:177.40px;top:270.06px;width:60px;">1 353,19 ₽</div><div class="t" style="left:225.50px;top:270.06px;width:60px;">101</div><div class="t" style="left:273.40px;top:270.06px;width:60px;">13,40 ₽</div><div class="t" style="left:321.20px;top:270.06px;width:60px;">4 626,03 ₽</div><div class="t" style="left:369.20px;top:270.06px;width:60px;">93</div><div class="t" style="left:417.50px;top:270.06px;width:60px;">49,74 ₽</div><div class="t" style="left:494.90px;top:270.06px;width:60px;">19</div><div class="t" style="left:619.00px;top:270.06px;width:60px;">1</div><div class="t" style="left:-17.40px;top:281.68px;width:60px;">20.04.2022</div><div class="t" style="left:33.10px;top:281.68px;width:60px;">3 918,99 ₽</div><div class="t" style="left:81.20px;top:281.68px;width:60px;">153</div><div class="t" style="left:129.30px;top:281.68px;width:60px;">25,61 ₽</div><div class="t" style="left:177.40px;top:281.68px;width:60px;">1 071,91 ₽</div><div class="t" style="left:225.50px;top:281.68px;width:60px;">88</div><div class="t" style="left:273.40px;top:281.68px;width:60px;">12,18 ₽</div><div class="t" style="left:321.20px;top:281.68px;width:60px;">2 847,08 ₽</div><div class="t" style="left:369.20px;top:281.68px;width:60px;">65</div><div class="t" style="left:417.50px;top:281.68px;width:60px;">43,80 ₽</div><div class="t" style="left:494.90px;top:281.68px;width:60px;">11</div><div class="t" style="left:619.00px;top:281.68px;width:60px;">0</div><div class="t" style="left:-17.40px;top:293.30px;width:60px;">21.04.2022</div><div class="t" style="left:33.10px;top:293.30px;width:60px;">4 016,44 ₽</div><div class="t" style="left:81.20px;top:293.30px;width:60px;">155</div><div class="t" style="left:129.30px;top:293.30px;width:60px;">25,91 ₽</div><div class="t" style="left:177.40px;top:293.30px;width:60px;">1 016,44 ₽</div><div class="t" style="left:225.50px;top:293.30px;width:60px;">87</div><div class="t" style="left:273.40px;top:293.30px;width:60px;">11,68 ₽</div><div class="t" style="left:321.20px;top:293.30px;width:60px;">3 000,00 ₽</div><div class="t" style="left:369.20px;top:293.30px;width:60px;">68</div><div class="t" style="left:417.50px;top:293.30px;width:60px;">44,12 ₽</div><div class="t" style="left:494.90px;top:293.30px;width:60px;">20</div><div class="t" style="left:619.00px;top:293.30px;width:60px;">1</div><div class="t" style="left:-17.40px;top:304.92px;width:60px;">22.04.2022</div><div class="t" style="left:33.10px;top:304.92px;width:60px;">3 755,31 ₽</div><div class="t" style="left:81.20px;top:304.92px;width:60px;">127</div><div class="t" style="left:129.30px;top:304.92px;width:60px;">29,57 ₽</div><div class="t" style="left:177.40px;top:304.92px;width:60px;">900,94 ₽</div><div class="t" style="left:225.50px;top:304.92px;width:60px;">83</div><div class="t" style="left:273.40px;top:304.92px;width:60px;">10,85 ₽</div><div class="t" style="left:321.20px;top:304.92px;width:60px;">2 854,37 ₽</div><div class="t" style="left:369.20px;top:304.92px;width:60px;">44</div><div class="t" style="left:417.50px;top:304.92px;width:60px;">64,87 ₽</div><div class="t" style="left:494.90px;top:304.92px;width:60px;">13</div><div class="t" style="left:619.00px;top:304.92px;width:60px;">1</div><div class="t" style="left:-17.40px;top:316.54px;width:60px;">23.04.2022</div><div class="t" style="left:33.10px;top:316.54px;width:60px;">3 026,37 ₽</div><div class="t" style="left:81.20px;top:316.54px;width:60px;">148</div><div class="t" style="left:129.30px;top:316.54px;width:60px;">20,45 ₽</div><div class="t" style="left:177.40px;top:316.54px;width:60px;">906,34 ₽</div><div class="t" style="left:225.50px;top:316.54px;width:60px;">79</div><div class="t" style="left:273.40px;top:316.54px;width:60px;">11,47 ₽</div><div class="t" style="left:321.20px;top:316.54px;width:60px;">2 120,03 ₽</div><div class="t" style="left:369.20px;top:316.54px;width:60px;">69</div><div class="t" style="left:417.50px;top:316.54px;width:60px;">30,73 ₽</div><div class="t" style="left:494.90px;top:316.54px;width:60px;">11</div><div class="t" style="left:619.00px;top:316.54px;width:60px;">0</div><div class="t" style="left:-17.40px;top:328.16px;width:60px;">24.04.2022</div><div class="t" style="left:33.10px;top:328.16px;width:60px;">2 625,61 ₽</div><div class="t" style="left:81.20px;top:328.16px;width:60px;">120</div><div class="t" style="left:129.30px;top:328.16px;width:60px;">21,88 ₽</div><div class="t" style="left:177.40px;top:328.16px;width:60px;">529,74 ₽</div><div class="t" style="left:225.50px;top:328.16px;width:60px;">59</div><div class="t" style="left:273.40px;top:328.16px;width:60px;">8,98 ₽</div><div class="t" style="left:321.20px;top:328.16px;width:60px;">2 095,87 ₽</div><div class="t" style="left:369.20px;top:328.16px;width:60px;">61</div><div class="t" style="left:417.50px;top:328.16px;width:60px;">34,36 ₽</div><div class="t" style="left:494.90px;top:328.16px;width:60px;">20</div><div class="t" style="left:619.00px;top:328.16px;width:60px;">1</div><div class="t" style="left:-17.40px;top:339.78px;width:60px;">25.04.2022</div><div class="t" style="left:33.10px;top:339.78px;width:60px;">3 494,43 ₽</div><div class="t" style="left:81.20px;top:339.78px;width:60px;">150</div><div class="t" style="left:129.30px;top:339.78px;width:60px;">23,30 ₽</div><div class="t" style="left:177.40px;top:339.78px;width:60px;">1 115,24 ₽</div><div class="t" style="left:225.50px;top:339.78px;width:60px;">104</div><div class="t" style="left:273.40px;top:339.78px;width:60px;">10,72 ₽</div><div class="t" style="left:321.20px;top:339.78px;width:60px;">2 379,19 ₽</div><div class="t" style="left:369.20px;top:339.78px;width:60px;">46</div><div class="t" style="left:417.50px;top:339.78px;width:60px;">51,72 ₽</div><div class="t" style="left:494.90px;top:339.78px;width:60px;">11</div><div class="t" style="left:619.00px;top:339.78px;width:60px;">1</div><div class="t" style="left:-17.40px;top:351.40px;width:60px;">26.04.2022</div><div class="t" style="left:33.10px;top:351.40px;width:60px;">3 932,10 ₽</div><div class="t" style="left:81.20px;top:351.40px;width:60px;">157</div><div class="t" style="left:129.30px;top:351.40px;width:60px;">25,05 ₽</div><div class="t" style="left:177.40px;top:351.40px;width:60px;">1 478,58 ₽</div><div class="t" style="left:225.50px;top:351.40px;width:60px;">110</div><div class="t" style="left:273.40px;top:351.40px;width:60px;">13,44 ₽</div><div class="t" style="left:321.20px;top:351.40px;width:60px;">2 453,52 ₽</div><div class="t" style="left:369.20px;top:351.40px;width:60px;">47</div><div class="t" style="left:417.50px;top:351.40px;width:60px;">52,20 ₽</div><div class="t" style="left:494.90px;top:351.40px;width:60px;">21</div><div class="t" style="left:619.00px;top:351.40px;width:60px;">4</div><div class="t" style="left:-17.40px;top:363.02px;width:60px;">27.04.2022</div><div class="t" style="left:33.10px;top:363.02px;width:60px;">3 549,09 ₽</div><div class="t" style="left:81.20px;top:363.02px;width:60px;">149</div><div class="t" style="left:129.30px;top:363.02px;width:60px;">23,82 ₽</div><div class="t" style="left:177.40px;top:363.02px;width:60px;">1 144,19 ₽</div><div class="t" style="left:225.50px;top:363.02px;width:60px;">89</div><div class="t" style="left:273.40px;top:363.02px;width:60px;">12,86 ₽</div><div class="t" style="left:321.20px;top:363.02px;width:60px;">2 404,90 ₽</div><div class="t" style="left:369.20px;top:363.02px;width:60px;">60</div><div class="t" style="left:417.50px;top:363.02px;width:60px;">40,08 ₽</div><div class="t" style="left:494.90px;top:363.02px;width:60px;">19</div><div class="t" style="left:619.00px;top:363.02px;width:60px;">0</div><div class="t" style="left:-17.40px;top:374.64px;width:60px;">28.04.2022</div><div class="t" style="left:33.10px;top:374.64px;width:60px;">3 966,59 ₽</div><div class="t" style="left:81.20px;top:374.64px;width:60px;">187</div><div class="t" style="left:129.30px;top:374.64px;width:60px;">21,21 ₽</div><div class="t" style="left:177.40px;top:374.64px;width:60px;">1 528,28 ₽</div><div class="t" style="left:225.50px;top:374.64px;width:60px;">127</div><div class="t" style="left:273.40px;top:374.64px;width:60px;">12,03 ₽</div><div class="t" style="left:321.20px;top:374.64px;width:60px;">2 438,31 ₽</div><div class="t" style="left:369.20px;top:374.64px;width:60px;">60</div><div class="t" style="left:417.50px;top:374.64px;width:60px;">40,64 ₽</div><div class="t" style="left:494.90px;top:374.64px;width:60px;">11</div><div class="t" style="left:619.00px;top:374.64px;width:60px;">0</div><div class="t" style="left:-17.40px;top:386.26px;width:60px;">29.04.2022</div><div class="t" style="left:33.10px;top:386.26px;width:60px;">3 330,81 ₽</div><div class="t" style="left:81.20px;top:386.26px;width:60px;">158</div><div class="t" style="left:129.30px;top:386.26px;width:60px;">21,08 ₽</div><div class="t" style="left:177.40px;top:386.26px;width:60px;">986,40 ₽</div><div class="t" style="left:225.50px;top:386.26px;width:60px;">106</div><div class="t" style="left:273.40px;top:386.26px;width:60px;">9,31 ₽</div><div class="t" style="left:321.20px;top:386.26px;width:60px;">2 344,41 ₽</div><div class="t" style="left:369.20px;top:386.26px;width:60px;">52</div><div class="t" style="left:417.50px;top:386.26px;width:60px;">45,08 ₽</div><div class="t" style="left:494.90px;top:386.26px;width:60px;">33</div><div class="t" style="left:619.00px;top:386.26px;width:60px;">0</div><div class="t" style="left:-17.40px;top:397.88px;width:60px;">30.04.2022</div><div class="t" style="left:33.10px;top:397.88px;width:60px;">2 523,55 ₽</div><div class="t" style="left:81.20px;top:397.88px;width:60px;">120</div><div class="t" style="left:129.30px;top:397.88px;width:60px;">21,03 ₽</div><div class="t" style="left:177.40px;top:397.88px;width:60px;">496,69 ₽</div><div class="t" style="left:225.50px;top:397.88px;width:60px;">52</div><div class="t" style="left:273.40px;top:397.88px;width:60px;">9,55 ₽</div><div class="t" style="left:321.20px;top:397.88px;width:60px;">2 026,86 ₽</div><div class="t" style="left:369.20px;top:397.88px;width:60px;">68</div><div class="t" style="left:417.50px;top:397.88px;width:60px;">29,81 ₽</div><div class="t" style="left:494.90px;top:397.88px;width:60px;">24</div><div class="t" style="left:619.00px;top:397.88px;width:60px;">0</div><div class="t" style="left:-17.40px;top:409.50px;width:60px;">01.05.2022</div><div class="t" style="left:33.10px;top:409.50px;width:60px;">2 903,77 ₽</div><div class="t" style="left:81.20px;top:409.50px;width:60px;">131</div><div class="t" style="left:129.30px;top:409.50px;width:60px;">22,17 ₽</div><div class="t" style="left:177.40px;top:409.50px;width:60px;">362,66 ₽</div><div class="t" style="left:225.50px;top:409.50px;width:60px;">48</div><div class="t" style="left:273.40px;top:409.50px;width:60px;">7,56 ₽</div><div class="t" style="left:321.20px;top:409.50px;width:60px;">2 541,11 ₽</div><div class="t" style="left:369.20px;top:409.50px;width:60px;">83</div><div class="t" style="left:417.50px;top:409.50px;width:60px;">30,62 ₽</div><div class="t" style="left:494.90px;top:409.50px;width:60px;">27</div><div class="t" style="left:619.00px;top:409.50px;width:60px;">0</div><div class="t" style="left:-17.40px;top:421.12px;width:60px;">02.05.2022</div><div class="t" style="left:33.10px;top:421.12px;width:60px;">2 780,09 ₽</div><div class="t" style="left:81.20px;top:421.12px;width:60px;">174</div><div class="t" style="left:129.30px;top:421.12px;width:60px;">15,98 ₽</div><div class="t" style="left:177.40px;top:421.12px;width:60px;">1 096,93 ₽</div><div class="t" style="left:225.50px;top:421.12px;width:60px;">106</div><div class="t" style="left:273.40px;top:421.12px;width:60px;">10,35 ₽</div><div class="t" style="left:321.20px;top:421.12px;width:60px;">1 683,16 ₽</div><div class="t" style="left:369.20px;top:421.12px;width:60px;">68</div><div class="t" style="left:417.50px;top:421.12px;width:60px;">24,75 ₽</div><div class="t" style="left:494.90px;top:421.12px;width:60px;">38</div><div class="t" style="left:619.00px;top:421.12px;width:60px;">0</div><div class="t" style="left:-17.40px;top:432.74px;width:60px;">03.05.2022</div><div class="t" style="left:33.10px;top:432.74px;width:60px;">1 078,38 ₽</div><div class="t" style="left:81.20px;top:432.74px;width:60px;">110</div><div class="t" style="left:129.30px;top:432.74px;width:60px;">9,80 ₽</div><div class="t" style="left:177.40px;top:432.74px;width:60px;">1 078,38 ₽</div><div class="t" style="left:225.50px;top:432.74px;width:60px;">109</div><div class="t" style="left:273.40px;top:432.74px;width:60px;">9,89 ₽</div><div class="t" style="left:321.20px;top:432.74px;width:60px;">0,00 ₽</div><div class="t" style="left:369.20px;top:432.74px;width:60px;">1</div><div class="t" style="left:417.50px;top:432.74px;width:60px;">0,00 ₽</div><div class="t" style="left:494.90px;top:432.74px;width:60px;">35</div><div class="t" style="left:619.00px;top:432.74px;width:60px;">0</div><div class="t" style="left:-17.40px;top:444.36px;width:60px;">04.05.2022</div><div class="t" style="left:33.10px;top:444.36px;width:60px;">1 607,87 ₽</div><div class="t" style="left:81.20px;top:444.36px;width:60px;">149</div><div class="t" style="left:129.30px;top:444.36px;width:60px;">10,79 ₽</div><div class="t" style="left:177.40px;top:444.36px;width:60px;">1 607,87 ₽</div><div class="t" style="left:225.50px;top:444.36px;width:60px;">149</div><div class="t" style="left:273.40px;top:444.36px;width:60px;">10,79 ₽</div><div class="t" style="left:321.20px;top:444.36px;width:60px;">0,00 ₽</div><div class="t" style="left:369.20px;top:444.36px;width:60px;">0</div><div class="t" style="left:417.50px;top:444.36px;width:60px;">-</div><div class="t" style="left:494.90px;top:444.36px;width:60px;">34</div><div class="t" style="left:619.00px;top:444.36px;width:60px;">0</div><div class="t" style="left:-17.40px;top:455.98px;width:60px;">05.05.2022</div><div class="t" style="left:33.10px;top:455.98px;width:60px;">1 633,80 ₽</div><div class="t" style="left:81.20px;top:455.98px;width:60px;">129</div><div class="t" style="left:129.30px;top:455.98px;width:60px;">12,67 ₽</div><div class="t" style="left:177.40px;top:455.98px;width:60px;">1 033,80 ₽</div><div class="t" style="left:225.50px;top:455.98px;width:60px;">120</div><div class="t" style="left:273.40px;top:455.98px;width:60px;">8,62 ₽</div><div class="t" style="left:321.20px;top:455.98px;width:60px;">600,00 ₽</div><div class="t" style="left:369.20px;top:455.98px;width:60px;">9</div><div class="t" style="left:417.50px;top:455.98px;width:60px;">66,67 ₽</div><div class="t" style="left:494.90px;top:455.98px;width:60px;">34</div><div class="t" style="left:619.00px;top:455.98px;width:60px;">0</div><div class="t" style="left:-17.40px;top:467.60px;width:60px;">06.05.2022</div><div class="t" style="left:33.10px;top:467.60px;width:60px;">3 437,29 ₽</div><div class="t" style="left:81.20px;top:467.60px;width:60px;">171</div><div class="t" style="left:129.30px;top:467.60px;width:60px;">20,10 ₽</div><div class="t" style="left:177.40px;top:467.60px;width:60px;">1 059,22 ₽</div><div class="t" style="left:225.50px;top:467.60px;width:60px;">101</div><div class="t" style="left:273.40px;top:467.60px;width:60px;">10,49 ₽</div><div class="t" style="left:321.20px;top:467.60px;width:60px;">2 378,07 ₽</div><div class="t" style="left:369.20px;top:467.60px;width:60px;">70</div><div class="t" style="left:417.50px;top:467.60px;width:60px;">33,97 ₽</div><div class="t" style="left:494.90px;top:467.60px;width:60px;">21</div><div class="t" style="left:619.00px;top:467.60px;width:60px;">1</div><div class="t" style="left:-17.40px;top:479.22px;width:60px;">07.05.2022</div><div class="t" style="left:33.10px;top:479.22px;width:60px;">3 022,65 ₽</div><div class="t" style="left:81.20px;top:479.22px;width:60px;">145</div><div class="t" style="left:129.30px;top:479.22px;width:60px;">20,85 ₽</div><div class="t" style="left:177.40px;top:479.22px;width:60px;">623,28 ₽</div><div class="t" style="left:225.50px;top:479.22px;width:60px;">70</div><div class="t" style="left:273.40px;top:479.22px;width:60px;">8,90 ₽</div><div class="t" style="left:321.20px;top:479.22px;width:60px;">2 399,37 ₽</div><div class="t" style="left:369.20px;top:479.22px;width:60px;">75</div><div class="t" style="left:417.50px;top:479.22px;width:60px;">31,99 ₽</div><div class="t" style="left:494.90px;top:479.22px;width:60px;">7</div><div class="t" style="left:619.00px;top:479.22px;width:60px;">0</div><div class="t" style="left:-17.40px;top:490.84px;width:60px;">08.05.2022</div><div class="t" style="left:33.10px;top:490.84px;width:60px;">3 100,29 ₽</div><div class="t" style="left:81.20px;top:490.84px;width:60px;">183</div><div class="t" style="left:129.30px;top:490.84px;width:60px;">15,94 ₽</div><div class="t" style="left:177.40px;top:490.84px;width:60px;">700,50 ₽</div><div class="t" style="left:225.50px;top:490.84px;width:60px;">73</div><div class="t" style="left:273.40px;top:490.84px;width:60px;">9,60 ₽</div><div class="t" style="left:321.20px;top:490.84px;width:60px;">2 399,79 ₽</div><div class="t" style="left:369.20px;top:490.84px;width:60px;">110</div><div class="t" style="left:417.50px;top:490.84px;width:60px;">21,82 ₽</div><div class="t" style="left:494.90px;top:490.84px;width:60px;">8</div><div class="t" style="left:619.00px;top:490.84px;width:60px;">0</div><div class="t" style="left:-17.40px;top:502.46px;width:60px;">09.05.2022</div><div class="t" style="left:33.10px;top:502.46px;width:60px;">3 332,22 ₽</div><div class="t" style="left:81.20px;top:502.46px;width:60px;">193</div><div class="t" style="left:129.30px;top:502.46px;width:60px;">17,27 ₽</div><div class="t" style="left:177.40px;top:502.46px;width:60px;">932,52 ₽</div><div class="t" style="left:225.50px;top:502.46px;width:60px;">102</div><div class="t" style="left:273.40px;top:502.46px;width:60px;">9,14 ₽</div><div class="t" style="left:321.20px;top:502.46px;width:60px;">2 399,70 ₽</div><div class="t" style="left:369.20px;top:502.46px;width:60px;">91</div><div class="t" style="left:417.50px;top:502.46px;width:60px;">26,37 ₽</div><div class="t" style="left:494.90px;top:502.46px;width:60px;">6</div><div class="t" style="left:619.00px;top:502.46px;width:60px;">0</div><div class="t" style="left:-17.40px;top:514.08px;width:60px;">10.05.2022</div><div class="t" style="left:33.10px;top:514.08px;width:60px;">9 106,25 ₽</div><div class="t" style="left:81.20px;top:514.08px;width:60px;">374</div><div class="t" style="left:129.30px;top:514.08px;width:60px;">24,35 ₽</div><div class="t" style="left:177.40px;top:514.08px;width:60px;">6 706,81 ₽</div><div class="t" style="left:225.50px;top:514.08px;width:60px;">267</div><div class="t" style="left:273.40px;top:514.08px;width:60px;">25,12 ₽</div><div class="t" style="left:321.20px;top:514.08px;width:60px;">2 399,44 ₽</div><div class="t" style="left:369.20px;top:514.08px;width:60px;">107</div><div class="t" style="left:417.50px;top:514.08px;width:60px;">22,42 ₽</div><div class="t" style="left:494.90px;top:514.08px;width:60px;">9</div><div class="t" style="left:619.00px;top:514.08px;width:60px;">0</div><div class="t" style="left:-17.40px;top:525.70px;width:60px;">11.05.2022</div><div class="t" style="left:33.10px;top:525.70px;width:60px;">13 970,82 ₽</div><div class="t" style="left:81.20px;top:525.70px;width:60px;">740</div><div class="t" style="left:129.30px;top:525.70px;width:60px;">18,88 ₽</div><div class="t" style="left:177.40px;top:525.70px;width:60px;">11 580,32 ₽</div><div class="t" style="left:225.50px;top:525.70px;width:60px;">647</div><div class="t" style="left:273.40px;top:525.70px;width:60px;">17,90 ₽</div><div class="t" style="left:321.20px;top:525.70px;width:60px;">2 390,50 ₽</div><div class="t" style="left:369.20px;top:525.70px;width:60px;">93</div><div class="t" style="left:417.50px;top:525.70px;width:60px;">25,70 ₽</div><div class="t" style="left:494.90px;top:525.70px;width:60px;">14</div><div class="t" style="left:619.00px;top:525.70px;width:60px;">0</div><div class="t" style="left:-17.40px;top:537.32px;width:60px;">12.05.2022</div><div class="t" style="left:33.10px;top:537.32px;width:60px;">9 109,15 ₽</div><div class="t" style="left:81.20px;top:537.32px;width:60px;">462</div><div class="t" style="left:129.30px;top:537.32px;width:60px;">19,72 ₽</div><div class="t" style="left:177.40px;top:537.32px;width:60px;">6 709,15 ₽</div><div class="t" style="left:225.50px;top:537.32px;width:60px;">380</div><div class="t" style="left:273.40px;top:537.32px;width:60px;">17,66 ₽</div><div class="t" style="left:321.20px;top:537.32px;width:60px;">2 400,00 ₽</div><div class="t" style="left:369.20px;top:537.32px;width:60px;">82</div><div class="t" style="left:417.50px;top:537.32px;width:60px;">29,27 ₽</div><div class="t" style="left:494.90px;top:537.32px;width:60px;">7</div><div class="t" style="left:619.00px;top:537.32px;width:60px;">0</div><div class="t" style="left:-17.40px;top:548.94px;width:60px;">13.05.2022</div><div class="t" style="left:33.10px;top:548.94px;width:60px;">8 065,02 ₽</div><div class="t" style="left:81.20px;top:548.94px;width:60px;">435</div><div class="t" style="left:129.30px;top:548.94px;width:60px;">18,54 ₽</div><div class="t" style="left:177.40px;top:548.94px;width:60px;">5 665,18 ₽</div><div class="t" style="left:225.50px;top:548.94px;width:60px;">366</div><div class="t" style="left:273.40px;top:548.94px;width:60px;">15,48 ₽</div><div class="t" style="left:321.20px;top:548.94px;width:60px;">2 399,84 ₽</div><div class="t" style="left:369.20px;top:548.94px;width:60px;">69</div><div class="t" style="left:417.50px;top:548.94px;width:60px;">34,78 ₽</div><div class="t" style="left:494.90px;top:548.94px;width:60px;">8</div><div class="t" style="left:619.00px;top:548.94px;width:60px;">0</div><div class="t" style="left:-17.40px;top:560.56px;width:60px;">14.05.2022</div><div class="t" style="left:33.10px;top:560.56px;width:60px;">6 514,54 ₽</div><div class="t" style="left:81.20px;top:560.56px;width:60px;">328</div><div class="t" style="left:129.30px;top:560.56px;width:60px;">19,86 ₽</div><div class="t" style="left:177.40px;top:560.56px;width:60px;">4 114,54 ₽</div><div class="t" style="left:225.50px;top:560.56px;width:60px;">247</div><div class="t" style="left:273.40px;top:560.56px;width:60px;">16,66 ₽</div><div class="t" style="left:321.20px;top:560.56px;width:60px;">2 400,00 ₽</div><div class="t" style="left:369.20px;top:560.56px;width:60px;">81</div><div class="t" style="left:417.50px;top:560.56px;width:60px;">29,63 ₽</div><div class="t" style="left:494.90px;top:560.56px;width:60px;">5</div><div class="t" style="left:619.00px;top:560.56px;width:60px;">0</div><div class="t" style="left:-17.40px;top:572.18px;width:60px;">15.05.2022</div><div class="t" style="left:33.10px;top:572.18px;width:60px;">6 460,69 ₽</div><div class="t" style="left:81.20px;top:572.18px;width:60px;">373</div><div class="t" style="left:129.30px;top:572.18px;width:60px;">17,32 ₽</div><div class="t" style="left:177.40px;top:572.18px;width:60px;">4 061,16 ₽</div><div class="t" style="left:225.50px;top:572.18px;width:60px;">290</div><div class="t" style="left:273.40px;top:572.18px;width:60px;">14,00 ₽</div><div class="t" style="left:321.20px;top:572.18px;width:60px;">2 399,53 ₽</div><div class="t" style="left:369.20px;top:572.18px;width:60px;">83</div><div class="t" style="left:417.50px;top:572.18px;width:60px;">28,91 ₽</div><div class="t" style="left:494.90px;top:572.18px;width:60px;">14</div><div class="t" style="left:619.00px;top:572.18px;width:60px;">0</div><div class="t" style="left:-17.40px;top:583.80px;width:60px;">16.05.2022</div><div class="t" style="left:33.10px;top:583.80px;width:60px;">7 872,42 ₽</div><div class="t" style="left:81.20px;top:583.80px;width:60px;">466</div><div class="t" style="left:129.30px;top:583.80px;width:60px;">16,89 ₽</div><div class="t" style="left:177.40px;top:583.80px;width:60px;">7 438,66 ₽</div><div class="t" style="left:225.50px;top:583.80px;width:60px;">449</div><div class="t" style="left:273.40px;top:583.80px;width:60px;">16,57 ₽</div><div class="t" style="left:321.20px;top:583.80px;width:60px;">433,76 ₽</div><div class="t" style="left:369.20px;top:583.80px;width:60px;">17</div><div class="t" style="left:417.50px;top:583.80px;width:60px;">25,51 ₽</div><div class="t" style="left:494.90px;top:583.80px;width:60px;">22</div><div class="t" style="left:619.00px;top:583.80px;width:60px;">0</div><div class="t" style="left:-17.40px;top:595.42px;width:60px;">17.05.2022</div><div class="t" style="left:33.10px;top:595.42px;width:60px;">7 478,36 ₽</div><div class="t" style="left:81.20px;top:595.42px;width:60px;">455</div><div class="t" style="left:129.30px;top:595.42px;width:60px;">16,44 ₽</div><div class="t" style="left:177.40px;top:595.42px;width:60px;">7 478,36 ₽</div><div class="t" style="left:225.50px;top:595.42px;width:60px;">455</div><div class="t" style="left:273.40px;top:595.42px;width:60px;">16,44 ₽</div><div class="t" style="left:321.20px;top:595.42px;width:60px;">0,00 ₽</div><div class="t" style="left:369.20px;top:595.42px;width:60px;">0</div><div class="t" style="left:417.50px;top:595.42px;width:60px;">-</div><div class="t" style="left:494.90px;top:595.42px;width:60px;">24</div><div class="t" style="left:619.00px;top:595.42px;width:60px;">0</div><div style="left:1.00px;top:3.40px;width:45.00px;font-family:'Liberation Serif',serif;font-weight:bold;color:#111;text-align:center;white-space:nowrap;-webkit-text-stroke:0.15px currentColor;font-size:6.6px;line-height:7.26px;">Дата</div><div style="left:0.00px;top:12.30px;width:45.00px;font-family:'Liberation Serif',serif;font-weight:bold;color:#111;text-align:center;white-space:nowrap;-webkit-text-stroke:0.15px currentColor;font-size:8.0px;line-height:9.4px;color:#ff0000">(Дедлайн<br>обновлени</div><div style="left:5.00px;top:31.00px;width:45.00px;font-family:'Liberation Serif',serif;font-weight:bold;color:#111;text-align:center;white-space:nowrap;-webkit-text-stroke:0.15px currentColor;font-size:7.3px;line-height:6px;color:#ff0000;letter-spacing:0.8px">----</div><div style="left:0.50px;top:41.60px;width:45.00px;font-family:'Liberation Serif',serif;font-weight:bold;color:#111;text-align:center;white-space:nowrap;-webkit-text-stroke:0.15px currentColor;font-size:7.0px;line-height:7.700000000000001px;">Date</div><div style="left:46.00px;top:13.80px;width:144.30px;font-family:'Liberation Serif',serif;font-weight:bold;color:#111;text-align:center;white-space:nowrap;-webkit-text-stroke:0.15px currentColor;font-size:7.4px;line-height:8.14px;">Реклама: Всего</div><div style="left:190.30px;top:13.80px;width:144.10px;font-family:'Liberation Serif',serif;font-weight:bold;color:#111;text-align:center;white-space:nowrap;-webkit-text-stroke:0.15px currentColor;font-size:7.4px;line-height:8.14px;color:#1155cc"><u>Яндекс Директ</u></div><div style="left:334.40px;top:13.80px;width:144.10px;font-family:'Liberation Serif',serif;font-weight:bold;color:#111;text-align:center;white-space:nowrap;-webkit-text-stroke:0.15px currentColor;font-size:7.4px;line-height:8.14px;color:#1155cc"><u>ВКонтакте</u></div><div style="left:478.50px;top:8.80px;width:77.50px;font-family:'Liberation Serif',serif;font-weight:bold;color:#111;text-align:center;white-space:nowrap;-webkit-text-stroke:0.15px currentColor;font-size:7.3px;line-height:9.0px;">Маркетплейсы<br>(Заказы товаров)</div><div style="left:556.00px;top:8.80px;width:72.00px;font-family:'Liberation Serif',serif;font-weight:bold;color:#111;text-align:center;white-space:nowrap;-webkit-text-stroke:0.15px currentColor;font-size:7.3px;line-height:9.0px;color:#1155cc">Taplink: Переходы в<br><u>маркетплейсы</u></div><div style="left:628.00px;top:14.20px;width:105.50px;font-family:'Liberation Serif',serif;font-weight:bold;color:#111;text-align:center;white-space:nowrap;-webkit-text-stroke:0.15px currentColor;font-size:7.3px;line-height:8.030000000000001px;color:#1155cc"><u>Сайт</u></div><div style="left:46.00px;top:40.80px;width:48.10px;font-family:'Liberation Serif',serif;font-weight:bold;color:#111;text-align:center;white-space:nowrap;-webkit-text-stroke:0.15px currentColor;font-size:7.3px;line-height:8.030000000000001px;">Затраты</div><div style="left:94.10px;top:40.80px;width:48.10px;font-family:'Liberation Serif',serif;font-weight:bold;color:#111;text-align:center;white-space:nowrap;-webkit-text-stroke:0.15px currentColor;font-size:7.3px;line-height:8.030000000000001px;">Клики</div><div style="left:142.20px;top:40.80px;width:48.10px;font-family:'Liberation Serif',serif;font-weight:bold;color:#111;text-align:center;white-space:nowrap;-webkit-text-stroke:0.15px currentColor;font-size:7.3px;line-height:8.030000000000001px;">Av.CPC</div><div style="left:190.30px;top:40.80px;width:48.10px;font-family:'Liberation Serif',serif;font-weight:bold;color:#111;text-align:center;white-space:nowrap;-webkit-text-stroke:0.15px currentColor;font-size:7.3px;line-height:8.030000000000001px;">Затраты</div><div style="left:238.40px;top:40.80px;width:48.10px;font-family:'Liberation Serif',serif;font-weight:bold;color:#111;text-align:center;white-space:nowrap;-webkit-text-stroke:0.15px currentColor;font-size:7.3px;line-height:8.030000000000001px;">Клики</div><div style="left:286.50px;top:40.80px;width:47.90px;font-family:'Liberation Serif',serif;font-weight:bold;color:#111;text-align:center;white-space:nowrap;-webkit-text-stroke:0.15px currentColor;font-size:7.3px;line-height:8.030000000000001px;">Av.CPC</div><div style="left:334.40px;top:40.80px;width:47.80px;font-family:'Liberation Serif',serif;font-weight:bold;color:#111;text-align:center;white-space:nowrap;-webkit-text-stroke:0.15px currentColor;font-size:7.3px;line-height:8.030000000000001px;">Затраты</div><div style="left:382.20px;top:40.80px;width:48.00px;font-family:'Liberation Serif',serif;font-weight:bold;color:#111;text-align:center;white-space:nowrap;-webkit-text-stroke:0.15px currentColor;font-size:7.3px;line-height:8.030000000000001px;">Клики</div><div style="left:430.20px;top:40.80px;width:48.30px;font-family:'Liberation Serif',serif;font-weight:bold;color:#111;text-align:center;white-space:nowrap;-webkit-text-stroke:0.15px currentColor;font-size:7.3px;line-height:8.030000000000001px;">Av.CPC</div><div style="left:478.50px;top:40.60px;width:77.50px;font-family:'Liberation Serif',serif;font-weight:bold;color:#111;text-align:center;white-space:nowrap;-webkit-text-stroke:0.15px currentColor;font-size:7.9px;line-height:8.690000000000001px;font-weight:normal;-webkit-text-stroke:0.3px #111">Заказанные товары</div><div style="left:556.00px;top:36.60px;width:72.00px;font-family:'Liberation Serif',serif;font-weight:bold;color:#111;text-align:center;white-space:nowrap;-webkit-text-stroke:0.15px currentColor;font-size:7.4px;line-height:8.6px;">Переходы в<br>маркетплейсы</div><div style="left:628.00px;top:40.80px;width:52.00px;font-family:'Liberation Serif',serif;font-weight:bold;color:#111;text-align:center;white-space:nowrap;-webkit-text-stroke:0.15px currentColor;font-size:7.3px;line-height:8.030000000000001px;">Формы</div><div style="left:680.00px;top:40.80px;width:53.50px;font-family:'Liberation Serif',serif;font-weight:bold;color:#111;text-align:center;white-space:nowrap;-webkit-text-stroke:0.15px currentColor;font-size:7.3px;line-height:8.030000000000001px;">CR</div><svg style="position:absolute;left:0;top:0;will-change:transform" width="1240" height="611"><defs><clipPath id="c3"><rect x="733" y="512.5" width="510" height="89.1"/></clipPath></defs><rect x="733.5" y="58" width="510" height="225.2" fill="#fff" stroke="#c9c9c0" stroke-width="0.8"/><rect x="733.5" y="283.2" width="510" height="224.0" fill="#fff" stroke="#c9c9c0" stroke-width="0.8"/><rect x="733.5" y="512.5" width="510" height="127.5" fill="#fff" stroke="#c9c9c0" stroke-width="0.8"/><text x="745.5" y="78.2" font-size="9.9" letter-spacing="0.2" fill="#595959" style="font-family:'Liberation Sans',sans-serif">Клики по рекламе и заказанные товары в разрезе по дням</text><line x1="779.4" y1="104.4" x2="1201.8" y2="104.4" stroke="#d9d9d9" stroke-width="0.9"/><line x1="777.0" y1="104.4" x2="783.0" y2="104.4" stroke="#333" stroke-width="0.9"/><line x1="779.4" y1="128.3" x2="1201.8" y2="128.3" stroke="#d9d9d9" stroke-width="0.9"/><line x1="777.0" y1="128.3" x2="783.0" y2="128.3" stroke="#333" stroke-width="0.9"/><line x1="779.4" y1="177.1" x2="1201.8" y2="177.1" stroke="#d9d9d9" stroke-width="0.9"/><line x1="777.0" y1="177.1" x2="783.0" y2="177.1" stroke="#333" stroke-width="0.9"/><line x1="779.4" y1="201.2" x2="1201.8" y2="201.2" stroke="#d9d9d9" stroke-width="0.9"/><line x1="777.0" y1="201.2" x2="783.0" y2="201.2" stroke="#333" stroke-width="0.9"/><line x1="777.0" y1="104.4" x2="783.0" y2="104.4" stroke="#333" stroke-width="0.9"/><line x1="779.4" y1="225.4" x2="1201.8" y2="225.4" stroke="#666" stroke-width="0.9"/><line x1="779.4" y1="104.4" x2="779.4" y2="225.4" stroke="#333" stroke-width="1"/><path d="M781.00,225.40C781.46,225.23 782.84,224.56 783.76,224.39C784.68,224.22 785.60,224.73 786.52,224.39C787.44,224.06 788.35,224.22 789.27,222.38C790.19,220.53 791.11,229.94 792.03,213.30C792.95,196.67 793.87,126.62 794.79,122.58C795.71,118.55 796.63,174.83 797.55,189.11C798.47,203.39 799.39,203.39 800.31,208.26C801.23,213.14 802.14,221.20 803.06,218.34C803.98,215.49 804.90,192.14 805.82,191.13C806.74,190.12 807.66,207.26 808.58,212.30C809.50,217.34 810.42,220.53 811.34,221.37C812.26,222.21 813.18,217.34 814.10,217.34C815.02,217.34 815.93,221.03 816.85,221.37C817.77,221.70 818.69,219.18 819.61,219.35C820.53,219.52 821.45,223.05 822.37,222.38C823.29,221.70 824.21,215.99 825.13,215.32C826.05,214.65 826.97,219.86 827.89,218.34C828.81,216.83 829.72,206.92 830.64,206.25C831.56,205.58 832.48,214.48 833.40,214.31C834.32,214.14 835.24,205.58 836.16,205.24C837.08,204.90 838.00,210.78 838.92,212.30C839.84,213.81 840.76,215.49 841.68,214.31C842.60,213.14 843.51,205.24 844.43,205.24C845.35,205.24 846.27,214.48 847.19,214.31C848.11,214.14 849.03,205.58 849.95,204.23C850.87,202.89 851.79,204.57 852.71,206.25C853.63,207.93 854.55,216.66 855.47,214.31C856.39,211.96 857.30,194.32 858.22,192.14C859.14,189.95 860.06,200.20 860.98,201.21C861.90,202.22 862.82,200.54 863.74,198.18C864.66,195.83 865.58,188.44 866.50,187.10C867.42,185.75 868.34,189.45 869.26,190.12C870.18,190.79 871.09,190.96 872.01,191.13C872.93,191.30 873.85,188.94 874.77,191.13C875.69,193.31 876.61,199.70 877.53,204.23C878.45,208.77 879.37,216.16 880.29,218.34C881.21,220.53 882.13,217.17 883.05,217.34C883.97,217.50 884.88,219.52 885.80,219.35C886.72,219.18 887.64,217.67 888.56,216.33C889.48,214.98 890.40,210.95 891.32,211.29C892.24,211.62 893.16,217.34 894.08,218.34C895.00,219.35 895.92,217.00 896.84,217.34C897.76,217.67 898.67,221.37 899.59,220.36C900.51,219.35 901.43,214.14 902.35,211.29C903.27,208.43 904.19,204.90 905.11,203.22C906.03,201.54 907.02,205.30 907.87,201.21C908.72,197.12 909.18,178.57 910.20,178.70C911.22,178.83 912.65,197.03 914.00,202.00C915.35,206.97 916.70,208.67 918.30,208.50C919.90,208.33 922.18,203.13 923.60,201.00C925.02,198.87 925.73,194.80 926.80,195.70C927.87,196.60 929.00,206.03 930.00,206.40C931.00,206.77 931.38,195.42 932.80,197.90C934.22,200.38 936.83,219.53 938.50,221.30C940.17,223.07 941.55,214.55 942.80,208.50C944.05,202.45 944.95,185.18 946.00,185.00C947.05,184.82 948.05,204.37 949.10,207.40C950.15,210.43 951.32,203.20 952.30,203.20C953.28,203.20 954.02,207.58 955.00,207.40C955.98,207.22 957.32,202.62 958.20,202.10C959.08,201.58 959.23,208.37 960.30,204.30C961.37,200.23 963.18,180.02 964.60,177.70C966.02,175.38 967.57,187.75 968.80,190.40C970.03,193.05 970.75,191.28 972.00,193.60C973.25,195.92 974.88,203.40 976.30,204.30C977.72,205.20 979.08,201.85 980.50,199.00C981.92,196.15 983.38,187.38 984.80,187.20C986.22,187.02 987.40,193.28 989.00,197.90C990.60,202.52 992.97,214.55 994.40,214.90C995.83,215.25 996.37,205.32 997.60,200.00C998.83,194.68 1000.40,183.35 1001.80,183.00C1003.20,182.65 1004.58,194.00 1006.00,197.90C1007.42,201.80 1008.87,204.98 1010.30,206.40C1011.73,207.82 1013.18,206.83 1014.60,206.40C1016.02,205.97 1017.38,203.98 1018.80,203.80C1020.22,203.62 1021.85,205.65 1023.10,205.30C1024.35,204.95 1025.23,201.35 1026.30,201.70C1027.37,202.05 1028.35,206.80 1029.50,207.40C1030.65,208.00 1032.05,205.12 1033.20,205.30C1034.35,205.48 1035.33,209.38 1036.40,208.50C1037.47,207.62 1038.72,202.83 1039.60,200.00C1040.48,197.17 1041.00,193.10 1041.70,191.50C1042.40,189.90 1042.92,187.92 1043.80,190.40C1044.68,192.88 1045.93,203.38 1047.00,206.40C1048.07,209.42 1049.32,209.03 1050.20,208.50C1051.08,207.97 1051.58,203.73 1052.30,203.20C1053.02,202.67 1053.68,206.37 1054.50,205.30C1055.32,204.23 1056.32,197.85 1057.20,196.80C1058.08,195.75 1059.02,199.00 1059.80,199.00C1060.58,199.00 1061.12,198.40 1061.90,196.80C1062.68,195.20 1063.72,187.10 1064.50,189.40C1065.28,191.70 1065.78,206.35 1066.60,210.60C1067.42,214.85 1068.23,217.20 1069.40,214.90C1070.57,212.60 1072.37,198.05 1073.60,196.80C1074.83,195.55 1075.73,206.87 1076.80,207.40C1077.87,207.93 1078.75,199.47 1080.00,200.00C1081.25,200.53 1083.07,209.53 1084.30,210.60C1085.53,211.67 1086.17,208.00 1087.40,206.40C1088.63,204.80 1090.45,201.00 1091.70,201.00C1092.95,201.00 1093.83,206.22 1094.90,206.40C1095.97,206.58 1097.15,203.52 1098.10,202.10C1099.05,200.68 1099.72,195.77 1100.60,197.90C1101.48,200.03 1102.40,211.88 1103.40,214.90C1104.40,217.92 1105.80,216.00 1106.60,216.00C1107.40,216.00 1107.40,216.50 1108.20,214.90C1109.00,213.30 1110.45,206.22 1111.40,206.40C1112.35,206.58 1113.02,215.12 1113.90,216.00C1114.78,216.88 1115.70,213.13 1116.70,211.70C1117.70,210.27 1118.83,207.75 1119.90,207.40C1120.97,207.05 1122.22,209.60 1123.10,209.60C1123.98,209.60 1124.13,207.05 1125.20,207.40C1126.27,207.75 1128.08,209.92 1129.50,211.70C1130.92,213.48 1132.47,216.87 1133.70,218.10C1134.93,219.33 1136.02,219.63 1136.90,219.10C1137.78,218.57 1137.93,215.78 1139.00,214.90C1140.07,214.02 1142.05,214.15 1143.30,213.80C1144.55,213.45 1145.37,212.27 1146.50,212.80C1147.63,213.33 1149.03,217.53 1150.10,217.00C1151.17,216.47 1151.90,209.60 1152.90,209.60C1153.90,209.60 1154.87,215.05 1156.10,217.00C1157.33,218.95 1158.88,220.05 1160.30,221.30C1161.72,222.55 1163.18,225.38 1164.60,224.50C1166.02,223.62 1167.38,216.53 1168.80,216.00C1170.22,215.47 1171.68,220.95 1173.10,221.30C1174.52,221.65 1176.07,220.23 1177.30,218.10C1178.53,215.97 1179.43,208.68 1180.50,208.50C1181.57,208.32 1182.63,216.82 1183.70,217.00C1184.77,217.18 1185.83,210.67 1186.90,209.60C1187.97,208.53 1189.03,211.67 1190.10,210.60C1191.17,209.53 1192.42,203.20 1193.30,203.20C1194.18,203.20 1194.68,208.12 1195.40,210.60C1196.12,213.08 1196.88,217.20 1197.60,218.10C1198.32,219.00 1199.35,216.35 1199.70,216.00" fill="none" stroke="#6aa84f" stroke-width="1.25" stroke-linejoin="round"/><path d="M781.00,225.40C781.46,225.40 782.84,225.40 783.76,225.40C784.68,225.40 785.60,225.40 786.52,225.40C787.44,225.40 788.35,225.40 789.27,225.40C790.19,225.40 791.11,225.40 792.03,225.40C792.95,225.40 793.87,225.40 794.79,225.40C795.71,225.40 796.63,225.40 797.55,225.40C798.47,225.40 799.39,225.40 800.31,225.40C801.23,225.40 802.14,225.40 803.06,225.40C803.98,225.40 804.90,225.40 805.82,225.40C806.74,225.40 807.66,225.47 808.58,225.40C809.50,225.33 810.42,226.22 811.34,225.00C812.26,223.77 813.18,219.54 814.10,218.04C815.02,216.55 815.93,216.48 816.85,216.03C817.77,215.57 818.69,214.55 819.61,215.32C820.53,216.09 821.45,220.48 822.37,220.66C823.29,220.85 824.21,218.85 825.13,216.43C826.05,214.01 826.97,207.91 827.89,206.15C828.81,204.38 829.72,205.21 830.64,205.84C831.56,206.48 832.48,209.32 833.40,209.98C834.32,210.63 835.24,209.34 836.16,209.78C837.08,210.21 838.00,212.48 838.92,212.60C839.84,212.72 840.76,210.36 841.68,210.48C842.60,210.60 843.51,213.34 844.43,213.30C845.35,213.27 846.27,210.90 847.19,210.28C848.11,209.66 849.03,209.56 849.95,209.57C850.87,209.59 851.79,210.88 852.71,210.38C853.63,209.88 854.55,206.70 855.47,206.55C856.39,206.40 857.30,208.35 858.22,209.47C859.14,210.60 860.06,212.85 860.98,213.30C861.90,213.76 862.82,213.10 863.74,212.20C864.66,211.29 865.58,207.51 866.50,207.86C867.42,208.21 868.34,213.89 869.26,214.31C870.18,214.73 871.09,210.70 872.01,210.38C872.93,210.06 873.85,212.77 874.77,212.40C875.69,212.03 876.61,208.43 877.53,208.16C878.45,207.89 879.37,210.99 880.29,210.78C881.21,210.58 882.13,207.76 883.05,206.95C883.97,206.15 884.88,209.15 885.80,205.95C886.72,202.74 887.64,196.89 888.56,187.70C889.48,178.51 890.40,152.29 891.32,150.81C892.24,149.33 893.16,173.71 894.08,178.83C895.00,183.95 895.92,179.30 896.84,181.55C897.76,183.80 898.67,191.30 899.59,192.34C900.51,193.38 901.43,190.12 902.35,187.80C903.27,185.48 904.19,179.80 905.11,178.43C906.03,177.05 906.90,179.49 907.87,179.54C908.83,179.58 909.88,178.47 910.90,178.70C911.92,178.93 912.77,179.85 914.00,180.90C915.23,181.95 917.13,182.53 918.30,185.00C919.47,187.47 920.12,201.00 921.00,195.70C921.88,190.40 922.82,162.42 923.60,153.20C924.38,143.98 924.63,138.80 925.70,140.40C926.77,142.00 928.75,160.13 930.00,162.80C931.25,165.47 932.32,158.00 933.20,156.40C934.08,154.80 934.42,155.68 935.30,153.20C936.18,150.72 937.62,140.08 938.50,141.50C939.38,142.92 939.72,163.47 940.60,161.70C941.48,159.93 942.57,131.08 943.80,130.90C945.03,130.72 946.65,162.38 948.00,160.60C949.35,158.82 950.73,120.02 951.90,120.20C953.07,120.38 954.05,153.73 955.00,161.70C955.95,169.67 956.72,170.12 957.60,168.00C958.48,165.88 959.38,155.55 960.30,149.00C961.22,142.45 962.22,126.58 963.10,128.70C963.98,130.82 964.82,155.85 965.60,161.70C966.38,167.55 967.02,163.80 967.80,163.80C968.58,163.80 969.35,166.48 970.30,161.70C971.25,156.92 972.68,135.45 973.50,135.10C974.32,134.75 974.73,146.30 975.20,159.60C975.67,172.90 975.70,204.80 976.30,214.90C976.90,225.00 977.92,220.02 978.80,220.20C979.68,220.38 980.60,221.13 981.60,216.00C982.60,210.87 983.73,198.98 984.80,189.40C985.87,179.82 987.02,159.40 988.00,158.50C988.98,157.60 989.82,180.27 990.70,184.00C991.58,187.73 992.33,183.20 993.30,180.90C994.27,178.60 995.27,173.05 996.50,170.20C997.73,167.35 999.47,163.98 1000.70,163.80C1001.93,163.62 1002.65,170.33 1003.90,169.10C1005.15,167.87 1006.78,156.22 1008.20,156.40C1009.62,156.58 1010.98,165.60 1012.40,170.20C1013.82,174.80 1015.45,184.00 1016.70,184.00C1017.95,184.00 1018.48,174.45 1019.90,170.20C1021.32,165.95 1023.78,159.20 1025.20,158.50C1026.62,157.80 1027.33,162.80 1028.40,166.00C1029.47,169.20 1030.62,176.12 1031.60,177.70C1032.58,179.28 1033.50,176.40 1034.30,175.50C1035.10,174.60 1035.77,172.12 1036.40,172.30C1037.03,172.48 1037.57,181.92 1038.10,176.60C1038.63,171.28 1039.00,142.53 1039.60,140.40C1040.20,138.27 1041.10,155.63 1041.70,163.80C1042.30,171.97 1042.57,192.77 1043.20,189.40C1043.83,186.03 1044.68,146.80 1045.50,143.60C1046.32,140.40 1047.20,160.80 1048.10,170.20C1049.00,179.60 1050.02,197.17 1050.90,200.00C1051.78,202.83 1052.52,190.82 1053.40,187.20C1054.28,183.58 1055.32,176.88 1056.20,178.30C1057.08,179.72 1057.75,191.92 1058.70,195.70C1059.65,199.48 1061.02,197.45 1061.90,201.00C1062.78,204.55 1063.28,216.10 1064.00,217.00C1064.72,217.90 1065.48,209.40 1066.20,206.40C1066.92,203.40 1067.60,198.30 1068.30,199.00C1069.00,199.70 1069.52,210.08 1070.40,210.60C1071.28,211.12 1072.72,203.15 1073.60,202.10C1074.48,201.05 1074.88,205.72 1075.70,204.30C1076.52,202.88 1077.43,193.97 1078.50,193.60C1079.57,193.23 1081.03,200.32 1082.10,202.10C1083.17,203.88 1084.02,204.93 1084.90,204.30C1085.78,203.67 1086.45,198.13 1087.40,198.30C1088.35,198.47 1089.53,204.85 1090.60,205.30C1091.67,205.75 1092.73,200.65 1093.80,201.00C1094.87,201.35 1095.93,208.28 1097.00,207.40C1098.07,206.52 1099.13,197.10 1100.20,195.70C1101.27,194.30 1102.17,197.22 1103.40,199.00C1104.63,200.78 1106.45,206.23 1107.60,206.40C1108.75,206.57 1109.38,201.78 1110.30,200.00C1111.22,198.22 1112.28,193.03 1113.10,195.70C1113.92,198.37 1114.50,213.52 1115.20,216.00C1115.90,218.48 1116.58,216.10 1117.30,210.60C1118.02,205.10 1118.78,183.00 1119.50,183.00C1120.22,183.00 1120.90,205.82 1121.60,210.60C1122.30,215.38 1123.03,214.00 1123.70,211.70C1124.37,209.40 1124.82,198.40 1125.60,196.80C1126.38,195.20 1127.40,201.57 1128.40,202.10C1129.40,202.63 1130.35,200.70 1131.60,200.00C1132.85,199.30 1134.73,196.48 1135.90,197.90C1137.07,199.32 1137.55,209.92 1138.60,208.50C1139.65,207.08 1141.23,189.40 1142.20,189.40C1143.17,189.40 1143.50,207.27 1144.40,208.50C1145.30,209.73 1146.55,198.93 1147.60,196.80C1148.65,194.67 1149.82,195.17 1150.70,195.70C1151.58,196.23 1152.00,200.88 1152.90,200.00C1153.80,199.12 1155.22,190.40 1156.10,190.40C1156.98,190.40 1157.15,200.88 1158.20,200.00C1159.25,199.12 1161.17,186.52 1162.40,185.10C1163.63,183.68 1164.53,189.02 1165.60,191.50C1166.67,193.98 1167.62,200.18 1168.80,200.00C1169.98,199.82 1171.63,191.12 1172.70,190.40C1173.77,189.68 1174.32,195.17 1175.20,195.70C1176.08,196.23 1177.00,192.88 1178.00,193.60C1179.00,194.32 1180.07,199.22 1181.20,200.00C1182.33,200.78 1183.60,198.83 1184.80,198.30C1186.00,197.77 1187.33,196.17 1188.40,196.80C1189.47,197.43 1190.20,198.02 1191.20,202.10C1192.20,206.18 1193.52,218.47 1194.40,221.30C1195.28,224.13 1195.80,221.93 1196.50,219.10C1197.20,216.27 1198.07,207.13 1198.60,204.30C1199.13,201.47 1199.52,202.47 1199.70,202.10" fill="none" stroke="#e06666" stroke-width="1.25" stroke-linejoin="round"/><line x1="936" y1="91" x2="941" y2="91" stroke="#e06666" stroke-width="1.4"/><text x="945" y="93.1" font-size="6.0" fill="#222" style="font-family:'Liberation Sans',sans-serif">Клики</text><line x1="972" y1="91" x2="977" y2="91" stroke="#6aa84f" stroke-width="1.4"/><text x="982" y="93.1" font-size="6.0" fill="#222" style="font-family:'Liberation Sans',sans-serif">Заказанные товары</text><text transform="translate(784.30,230.30) rotate(-62)" text-anchor="end" font-size="6.0" fill="#222" stroke="#222" stroke-width="0.12" style="font-family:'Liberation Sans',sans-serif">01.04.2022</text><text transform="translate(792.57,230.30) rotate(-62)" text-anchor="end" font-size="6.0" fill="#222" stroke="#222" stroke-width="0.12" style="font-family:'Liberation Sans',sans-serif">04.04.2022</text><text transform="translate(800.85,230.30) rotate(-62)" text-anchor="end" font-size="6.0" fill="#222" stroke="#222" stroke-width="0.12" style="font-family:'Liberation Sans',sans-serif">07.04.2022</text><text transform="translate(809.12,230.30) rotate(-62)" text-anchor="end" font-size="6.0" fill="#222" stroke="#222" stroke-width="0.12" style="font-family:'Liberation Sans',sans-serif">10.04.2022</text><text transform="translate(817.40,230.30) rotate(-62)" text-anchor="end" font-size="6.0" fill="#222" stroke="#222" stroke-width="0.12" style="font-family:'Liberation Sans',sans-serif">13.04.2022</text><text transform="translate(825.67,230.30) rotate(-62)" text-anchor="end" font-size="6.0" fill="#222" stroke="#222" stroke-width="0.12" style="font-family:'Liberation Sans',sans-serif">16.04.2022</text><text transform="translate(833.94,230.30) rotate(-62)" text-anchor="end" font-size="6.0" fill="#222" stroke="#222" stroke-width="0.12" style="font-family:'Liberation Sans',sans-serif">19.04.2022</text><text transform="translate(842.22,230.30) rotate(-62)" text-anchor="end" font-size="6.0" fill="#222" stroke="#222" stroke-width="0.12" style="font-family:'Liberation Sans',sans-serif">22.04.2022</text><text transform="translate(850.49,230.30) rotate(-62)" text-anchor="end" font-size="6.0" fill="#222" stroke="#222" stroke-width="0.12" style="font-family:'Liberation Sans',sans-serif">25.04.2022</text><text transform="translate(858.77,230.30) rotate(-62)" text-anchor="end" font-size="6.0" fill="#222" stroke="#222" stroke-width="0.12" style="font-family:'Liberation Sans',sans-serif">28.04.2022</text><text transform="translate(867.04,230.30) rotate(-62)" text-anchor="end" font-size="6.0" fill="#222" stroke="#222" stroke-width="0.12" style="font-family:'Liberation Sans',sans-serif">01.05.2022</text><text transform="translate(875.31,230.30) rotate(-62)" text-anchor="end" font-size="6.0" fill="#222" stroke="#222" stroke-width="0.12" style="font-family:'Liberation Sans',sans-serif">04.05.2022</text><text transform="translate(883.59,230.30) rotate(-62)" text-anchor="end" font-size="6.0" fill="#222" stroke="#222" stroke-width="0.12" style="font-family:'Liberation Sans',sans-serif">07.05.2022</text><text transform="translate(891.86,230.30) rotate(-62)" text-anchor="end" font-size="6.0" fill="#222" stroke="#222" stroke-width="0.12" style="font-family:'Liberation Sans',sans-serif">10.05.2022</text><text transform="translate(900.14,230.30) rotate(-62)" text-anchor="end" font-size="6.0" fill="#222" stroke="#222" stroke-width="0.12" style="font-family:'Liberation Sans',sans-serif">13.05.2022</text><text transform="translate(908.41,230.30) rotate(-62)" text-anchor="end" font-size="6.0" fill="#222" stroke="#222" stroke-width="0.12" style="font-family:'Liberation Sans',sans-serif">16.05.2022</text><text transform="translate(916.68,230.30) rotate(-62)" text-anchor="end" font-size="6.0" fill="#222" stroke="#222" stroke-width="0.12" style="font-family:'Liberation Sans',sans-serif">19.05.2022</text><text transform="translate(924.96,230.30) rotate(-62)" text-anchor="end" font-size="6.0" fill="#222" stroke="#222" stroke-width="0.12" style="font-family:'Liberation Sans',sans-serif">22.05.2022</text><text transform="translate(933.23,230.30) rotate(-62)" text-anchor="end" font-size="6.0" fill="#222" stroke="#222" stroke-width="0.12" style="font-family:'Liberation Sans',sans-serif">25.05.2022</text><text transform="translate(941.51,230.30) rotate(-62)" text-anchor="end" font-size="6.0" fill="#222" stroke="#222" stroke-width="0.12" style="font-family:'Liberation Sans',sans-serif">28.05.2022</text><text transform="translate(949.78,230.30) rotate(-62)" text-anchor="end" font-size="6.0" fill="#222" stroke="#222" stroke-width="0.12" style="font-family:'Liberation Sans',sans-serif">31.05.2022</text><text transform="translate(958.05,230.30) rotate(-62)" text-anchor="end" font-size="6.0" fill="#222" stroke="#222" stroke-width="0.12" style="font-family:'Liberation Sans',sans-serif">03.06.2022</text><text transform="translate(966.33,230.30) rotate(-62)" text-anchor="end" font-size="6.0" fill="#222" stroke="#222" stroke-width="0.12" style="font-family:'Liberation Sans',sans-serif">06.06.2022</text><text transform="translate(974.60,230.30) rotate(-62)" text-anchor="end" font-size="6.0" fill="#222" stroke="#222" stroke-width="0.12" style="font-family:'Liberation Sans',sans-serif">09.06.2022</text><text transform="translate(982.88,230.30) rotate(-62)" text-anchor="end" font-size="6.0" fill="#222" stroke="#222" stroke-width="0.12" style="font-family:'Liberation Sans',sans-serif">12.06.2022</text><text transform="translate(991.15,230.30) rotate(-62)" text-anchor="end" font-size="6.0" fill="#222" stroke="#222" stroke-width="0.12" style="font-family:'Liberation Sans',sans-serif">15.06.2022</text><text transform="translate(999.42,230.30) rotate(-62)" text-anchor="end" font-size="6.0" fill="#222" stroke="#222" stroke-width="0.12" style="font-family:'Liberation Sans',sans-serif">18.06.2022</text><text transform="translate(1007.70,230.30) rotate(-62)" text-anchor="end" font-size="6.0" fill="#222" stroke="#222" stroke-width="0.12" style="font-family:'Liberation Sans',sans-serif">21.06.2022</text><text transform="translate(1015.97,230.30) rotate(-62)" text-anchor="end" font-size="6.0" fill="#222" stroke="#222" stroke-width="0.12" style="font-family:'Liberation Sans',sans-serif">24.06.2022</text><text transform="translate(1024.25,230.30) rotate(-62)" text-anchor="end" font-size="6.0" fill="#222" stroke="#222" stroke-width="0.12" style="font-family:'Liberation Sans',sans-serif">27.06.2022</text><text transform="translate(1032.52,230.30) rotate(-62)" text-anchor="end" font-size="6.0" fill="#222" stroke="#222" stroke-width="0.12" style="font-family:'Liberation Sans',sans-serif">30.06.2022</text><text transform="translate(1040.79,230.30) rotate(-62)" text-anchor="end" font-size="6.0" fill="#222" stroke="#222" stroke-width="0.12" style="font-family:'Liberation Sans',sans-serif">03.07.2022</text><text transform="translate(1049.07,230.30) rotate(-62)" text-anchor="end" font-size="6.0" fill="#222" stroke="#222" stroke-width="0.12" style="font-family:'Liberation Sans',sans-serif">06.07.2022</text><text transform="translate(1057.34,230.30) rotate(-62)" text-anchor="end" font-size="6.0" fill="#222" stroke="#222" stroke-width="0.12" style="font-family:'Liberation Sans',sans-serif">09.07.2022</text><text transform="translate(1065.62,230.30) rotate(-62)" text-anchor="end" font-size="6.0" fill="#222" stroke="#222" stroke-width="0.12" style="font-family:'Liberation Sans',sans-serif">12.07.2022</text><text transform="translate(1073.89,230.30) rotate(-62)" text-anchor="end" font-size="6.0" fill="#222" stroke="#222" stroke-width="0.12" style="font-family:'Liberation Sans',sans-serif">15.07.2022</text><text transform="translate(1082.16,230.30) rotate(-62)" text-anchor="end" font-size="6.0" fill="#222" stroke="#222" stroke-width="0.12" style="font-family:'Liberation Sans',sans-serif">18.07.2022</text><text transform="translate(1090.44,230.30) rotate(-62)" text-anchor="end" font-size="6.0" fill="#222" stroke="#222" stroke-width="0.12" style="font-family:'Liberation Sans',sans-serif">21.07.2022</text><text transform="translate(1098.71,230.30) rotate(-62)" text-anchor="end" font-size="6.0" fill="#222" stroke="#222" stroke-width="0.12" style="font-family:'Liberation Sans',sans-serif">24.07.2022</text><text transform="translate(1106.99,230.30) rotate(-62)" text-anchor="end" font-size="6.0" fill="#222" stroke="#222" stroke-width="0.12" style="font-family:'Liberation Sans',sans-serif">27.07.2022</text><text transform="translate(1115.26,230.30) rotate(-62)" text-anchor="end" font-size="6.0" fill="#222" stroke="#222" stroke-width="0.12" style="font-family:'Liberation Sans',sans-serif">30.07.2022</text><text transform="translate(1123.53,230.30) rotate(-62)" text-anchor="end" font-size="6.0" fill="#222" stroke="#222" stroke-width="0.12" style="font-family:'Liberation Sans',sans-serif">02.08.2022</text><text transform="translate(1131.81,230.30) rotate(-62)" text-anchor="end" font-size="6.0" fill="#222" stroke="#222" stroke-width="0.12" style="font-family:'Liberation Sans',sans-serif">05.08.2022</text><text transform="translate(1140.08,230.30) rotate(-62)" text-anchor="end" font-size="6.0" fill="#222" stroke="#222" stroke-width="0.12" style="font-family:'Liberation Sans',sans-serif">08.08.2022</text><text transform="translate(1148.36,230.30) rotate(-62)" text-anchor="end" font-size="6.0" fill="#222" stroke="#222" stroke-width="0.12" style="font-family:'Liberation Sans',sans-serif">11.08.2022</text><text transform="translate(1156.63,230.30) rotate(-62)" text-anchor="end" font-size="6.0" fill="#222" stroke="#222" stroke-width="0.12" style="font-family:'Liberation Sans',sans-serif">14.08.2022</text><text transform="translate(1164.90,230.30) rotate(-62)" text-anchor="end" font-size="6.0" fill="#222" stroke="#222" stroke-width="0.12" style="font-family:'Liberation Sans',sans-serif">17.08.2022</text><text transform="translate(1173.18,230.30) rotate(-62)" text-anchor="end" font-size="6.0" fill="#222" stroke="#222" stroke-width="0.12" style="font-family:'Liberation Sans',sans-serif">20.08.2022</text><text transform="translate(1181.45,230.30) rotate(-62)" text-anchor="end" font-size="6.0" fill="#222" stroke="#222" stroke-width="0.12" style="font-family:'Liberation Sans',sans-serif">23.08.2022</text><text transform="translate(1189.73,230.30) rotate(-62)" text-anchor="end" font-size="6.0" fill="#222" stroke="#222" stroke-width="0.12" style="font-family:'Liberation Sans',sans-serif">26.08.2022</text><text transform="translate(1198.00,230.30) rotate(-62)" text-anchor="end" font-size="6.0" fill="#222" stroke="#222" stroke-width="0.12" style="font-family:'Liberation Sans',sans-serif">29.08.2022</text><text x="990" y="270" text-anchor="middle" font-size="6.8" font-weight="bold" fill="#222" style="font-family:'Liberation Sans',sans-serif">Дата</text><text x="745.5" y="303.5" font-size="9.9" letter-spacing="0.2" fill="#595959" style="font-family:'Liberation Sans',sans-serif">Затраты на рекламу и заказанные товары в разрезе по дням</text><line x1="776.5" y1="329.2" x2="1179.4" y2="329.2" stroke="#d9d9d9" stroke-width="0.9"/><line x1="774.1" y1="329.2" x2="780.1" y2="329.2" stroke="#333" stroke-width="0.9"/><line x1="776.5" y1="353.4" x2="1179.4" y2="353.4" stroke="#d9d9d9" stroke-width="0.9"/><line x1="774.1" y1="353.4" x2="780.1" y2="353.4" stroke="#333" stroke-width="0.9"/><line x1="776.5" y1="377.6" x2="1179.4" y2="377.6" stroke="#d9d9d9" stroke-width="0.9"/><line x1="774.1" y1="377.6" x2="780.1" y2="377.6" stroke="#333" stroke-width="0.9"/><line x1="776.5" y1="426.0" x2="1179.4" y2="426.0" stroke="#d9d9d9" stroke-width="0.9"/><line x1="774.1" y1="426.0" x2="780.1" y2="426.0" stroke="#333" stroke-width="0.9"/><line x1="774.1" y1="329.2" x2="780.1" y2="329.2" stroke="#333" stroke-width="0.9"/><line x1="776.5" y1="450.2" x2="1179.4" y2="450.2" stroke="#666" stroke-width="0.9"/><line x1="776.5" y1="329.2" x2="776.5" y2="450.2" stroke="#333" stroke-width="1"/><path d="M778.00,450.20C778.44,450.03 779.75,449.36 780.63,449.19C781.51,449.02 782.38,449.53 783.26,449.19C784.14,448.86 785.02,449.02 785.89,447.18C786.77,445.33 787.65,454.74 788.52,438.10C789.40,421.47 790.28,351.42 791.15,347.38C792.03,343.35 792.91,399.63 793.79,413.91C794.66,428.19 795.54,428.19 796.42,433.06C797.29,437.94 798.17,446.00 799.05,443.14C799.92,440.29 800.80,416.94 801.68,415.93C802.56,414.92 803.43,432.06 804.31,437.10C805.19,442.14 806.06,445.33 806.94,446.17C807.82,447.01 808.69,442.14 809.57,442.14C810.45,442.14 811.33,445.83 812.20,446.17C813.08,446.50 813.96,443.98 814.83,444.15C815.71,444.32 816.59,447.85 817.47,447.18C818.34,446.50 819.22,440.79 820.10,440.12C820.97,439.45 821.85,444.66 822.73,443.14C823.60,441.63 824.48,431.72 825.36,431.05C826.23,430.38 827.11,439.28 827.99,439.11C828.87,438.94 829.74,430.38 830.62,430.04C831.50,429.70 832.37,435.58 833.25,437.10C834.13,438.61 835.01,440.29 835.88,439.11C836.76,437.94 837.64,430.04 838.51,430.04C839.39,430.04 840.27,439.28 841.14,439.11C842.02,438.94 842.90,430.38 843.78,429.03C844.65,427.69 845.53,429.37 846.41,431.05C847.28,432.73 848.16,441.46 849.04,439.11C849.91,436.76 850.79,419.12 851.67,416.94C852.54,414.75 853.42,425.00 854.30,426.01C855.18,427.02 856.05,425.34 856.93,422.98C857.81,420.63 858.68,413.24 859.56,411.90C860.44,410.55 861.32,414.25 862.19,414.92C863.07,415.59 863.95,415.76 864.82,415.93C865.70,416.10 866.58,413.74 867.45,415.93C868.33,418.11 869.21,424.50 870.08,429.03C870.96,433.57 871.84,440.96 872.72,443.14C873.59,445.33 874.47,441.97 875.35,442.14C876.22,442.30 877.10,444.32 877.98,444.15C878.86,443.98 879.73,442.47 880.61,441.13C881.49,439.78 882.36,435.75 883.24,436.09C884.12,436.42 884.99,442.14 885.87,443.14C886.75,444.15 887.62,441.80 888.50,442.14C889.38,442.47 890.26,446.17 891.13,445.16C892.01,444.15 892.89,438.94 893.76,436.09C894.64,433.23 895.52,429.70 896.39,428.02C897.27,426.34 898.22,430.10 899.03,426.01C899.84,421.92 900.28,403.37 901.25,403.50C902.23,403.63 903.59,421.83 904.88,426.80C906.16,431.77 907.45,433.47 908.98,433.30C910.50,433.13 912.68,427.93 914.03,425.80C915.39,423.67 916.07,419.60 917.09,420.50C918.10,421.40 919.18,430.83 920.14,431.20C921.09,431.57 921.46,420.22 922.81,422.70C924.16,425.18 926.66,444.33 928.25,446.10C929.84,447.87 931.16,439.35 932.35,433.30C933.54,427.25 934.40,409.98 935.40,409.80C936.40,409.62 937.36,429.17 938.36,432.20C939.36,435.23 940.47,428.00 941.41,428.00C942.35,428.00 943.05,432.38 943.99,432.20C944.93,432.02 946.20,427.42 947.04,426.90C947.88,426.38 948.03,433.17 949.04,429.10C950.06,425.03 951.79,404.82 953.15,402.50C954.50,400.18 955.98,412.55 957.15,415.20C958.33,417.85 959.01,416.08 960.20,418.40C961.40,420.72 962.96,428.20 964.31,429.10C965.66,430.00 966.96,426.65 968.31,423.80C969.66,420.95 971.06,412.18 972.42,412.00C973.77,411.82 974.90,418.08 976.42,422.70C977.95,427.32 980.21,439.35 981.57,439.70C982.94,440.05 983.45,430.12 984.63,424.80C985.80,419.48 987.30,408.15 988.63,407.80C989.97,407.45 991.29,418.80 992.64,422.70C993.99,426.60 995.37,429.78 996.74,431.20C998.11,432.62 999.49,431.63 1000.84,431.20C1002.19,430.77 1003.50,428.78 1004.85,428.60C1006.20,428.42 1007.76,430.45 1008.95,430.10C1010.14,429.75 1010.99,426.15 1012.00,426.50C1013.02,426.85 1013.96,431.60 1015.06,432.20C1016.15,432.80 1017.49,429.92 1018.59,430.10C1019.68,430.28 1020.62,434.18 1021.64,433.30C1022.66,432.42 1023.85,427.63 1024.69,424.80C1025.53,421.97 1026.03,417.90 1026.70,416.30C1027.36,414.70 1027.86,412.72 1028.70,415.20C1029.54,417.68 1030.73,428.18 1031.75,431.20C1032.77,434.22 1033.96,433.83 1034.80,433.30C1035.65,432.77 1036.12,428.53 1036.81,428.00C1037.49,427.47 1038.13,431.17 1038.91,430.10C1039.68,429.03 1040.64,422.65 1041.48,421.60C1042.32,420.55 1043.21,423.80 1043.96,423.80C1044.71,423.80 1045.22,423.20 1045.97,421.60C1046.71,420.00 1047.70,411.90 1048.45,414.20C1049.19,416.50 1049.67,431.15 1050.45,435.40C1051.23,439.65 1052.01,442.00 1053.12,439.70C1054.23,437.40 1055.95,422.85 1057.13,421.60C1058.30,420.35 1059.16,431.67 1060.18,432.20C1061.20,432.73 1062.04,424.27 1063.23,424.80C1064.42,425.33 1066.16,434.33 1067.33,435.40C1068.51,436.47 1069.11,432.80 1070.29,431.20C1071.47,429.60 1073.20,425.80 1074.39,425.80C1075.59,425.80 1076.43,431.02 1077.45,431.20C1078.46,431.38 1079.59,428.32 1080.50,426.90C1081.40,425.48 1082.04,420.57 1082.88,422.70C1083.73,424.83 1084.60,436.68 1085.55,439.70C1086.51,442.72 1087.84,440.80 1088.61,440.80C1089.37,440.80 1089.37,441.30 1090.13,439.70C1090.90,438.10 1092.28,431.02 1093.19,431.20C1094.09,431.38 1094.73,439.92 1095.57,440.80C1096.41,441.68 1097.29,437.93 1098.24,436.50C1099.20,435.07 1100.28,432.55 1101.29,432.20C1102.31,431.85 1103.50,434.40 1104.35,434.40C1105.19,434.40 1105.33,431.85 1106.35,432.20C1107.37,432.55 1109.10,434.72 1110.45,436.50C1111.80,438.28 1113.28,441.67 1114.46,442.90C1115.64,444.13 1116.67,444.43 1117.51,443.90C1118.35,443.37 1118.50,440.58 1119.51,439.70C1120.53,438.82 1122.42,438.95 1123.62,438.60C1124.81,438.25 1125.59,437.07 1126.67,437.60C1127.75,438.13 1129.09,442.33 1130.10,441.80C1131.12,441.27 1131.82,434.40 1132.77,434.40C1133.73,434.40 1134.65,439.85 1135.83,441.80C1137.00,443.75 1138.48,444.85 1139.83,446.10C1141.19,447.35 1142.58,450.18 1143.94,449.30C1145.29,448.42 1146.59,441.33 1147.94,440.80C1149.29,440.27 1150.69,445.75 1152.04,446.10C1153.40,446.45 1154.87,445.03 1156.05,442.90C1157.23,440.77 1158.09,433.48 1159.10,433.30C1160.12,433.12 1161.14,441.62 1162.16,441.80C1163.17,441.98 1164.19,435.47 1165.21,434.40C1166.23,433.33 1167.24,436.47 1168.26,435.40C1169.28,434.33 1170.47,428.00 1171.31,428.00C1172.16,428.00 1172.63,432.92 1173.32,435.40C1174.00,437.88 1174.73,442.00 1175.42,442.90C1176.10,443.80 1177.09,441.15 1177.42,440.80" fill="none" stroke="#6aa84f" stroke-width="1.25" stroke-linejoin="round"/><path d="M778.00,450.20C778.44,450.20 779.75,450.20 780.63,450.20C781.51,450.20 782.38,450.20 783.26,450.20C784.14,450.20 785.02,450.20 785.89,450.20C786.77,450.20 787.65,450.20 788.52,450.20C789.40,450.20 790.28,450.20 791.15,450.20C792.03,450.20 792.91,450.20 793.79,450.20C794.66,450.20 795.54,450.20 796.42,450.20C797.29,450.20 798.17,450.20 799.05,450.20C799.92,450.20 800.80,450.20 801.68,450.20C802.56,450.20 803.43,450.29 804.31,450.20C805.19,450.11 806.06,450.68 806.94,449.66C807.82,448.63 808.70,445.16 809.57,444.03C810.45,442.89 811.33,443.19 812.20,442.86C813.08,442.53 813.96,441.28 814.83,442.05C815.71,442.83 816.59,447.00 817.47,447.51C818.34,448.02 819.22,450.33 820.10,445.12C820.97,439.92 821.85,421.46 822.73,416.28C823.60,411.10 824.48,412.32 825.36,414.03C826.23,415.73 827.11,424.51 827.99,426.49C828.87,428.47 829.74,425.74 830.62,425.90C831.50,426.07 832.37,426.48 833.25,427.48C834.13,428.48 835.00,430.75 835.88,431.89C836.76,433.03 837.64,434.79 838.51,434.32C839.39,433.84 840.27,430.38 841.14,429.06C842.02,427.74 842.90,426.47 843.77,426.41C844.65,426.36 845.53,428.76 846.41,428.73C847.28,428.69 848.16,425.98 849.04,426.20C849.91,426.42 850.79,428.59 851.67,430.05C852.54,431.50 853.42,434.50 854.30,434.93C855.18,435.36 856.05,432.89 856.93,432.63C857.81,432.37 858.68,431.54 859.56,433.38C860.44,435.22 861.32,442.49 862.19,443.68C863.07,444.86 863.95,441.03 864.82,440.47C865.70,439.91 866.58,442.16 867.45,440.32C868.33,438.47 869.21,430.80 870.09,429.40C870.96,428.00 871.84,431.57 872.72,431.91C873.59,432.25 874.47,431.76 875.35,431.44C876.22,431.13 877.10,436.10 877.98,430.04C878.86,423.98 879.73,405.83 880.61,395.11C881.49,384.38 882.36,365.68 883.24,365.68C884.12,365.67 884.99,389.13 885.87,395.09C886.75,401.04 887.62,398.79 888.50,401.41C889.38,404.02 890.26,409.17 891.13,410.79C892.01,412.40 892.89,412.48 893.76,411.11C894.64,409.74 895.52,403.60 896.39,402.57C897.27,401.55 898.04,404.93 899.03,404.96C900.01,404.98 901.04,402.19 902.30,402.70C903.56,403.21 905.35,405.35 906.60,408.00C907.85,410.65 908.92,415.77 909.80,418.60C910.68,421.43 911.02,436.70 911.90,425.00C912.78,413.30 914.10,359.75 915.10,348.40C916.10,337.05 917.02,353.35 917.90,356.90C918.78,360.45 919.62,369.17 920.40,369.70C921.18,370.23 921.60,360.63 922.60,360.10C923.60,359.57 925.17,362.07 926.40,366.50C927.63,370.93 928.87,392.20 930.00,386.70C931.13,381.20 932.25,338.12 933.20,333.50C934.15,328.88 934.92,350.85 935.70,359.00C936.48,367.15 936.97,386.47 937.90,382.40C938.83,378.33 940.38,338.85 941.30,334.60C942.22,330.35 942.62,345.20 943.40,356.90C944.18,368.60 945.05,400.90 946.00,404.80C946.95,408.70 948.12,387.40 949.10,380.30C950.08,373.20 951.00,363.43 951.90,362.20C952.80,360.97 953.63,371.48 954.50,372.90C955.37,374.32 956.30,370.53 957.10,370.70C957.90,370.87 958.48,379.03 959.30,373.90C960.12,368.77 961.30,340.95 962.00,339.90C962.70,338.85 963.07,351.65 963.50,367.60C963.93,383.55 964.07,423.55 964.60,435.60C965.13,447.65 965.88,439.00 966.70,439.90C967.52,440.80 968.62,445.97 969.50,441.00C970.38,436.03 971.05,420.75 972.00,410.10C972.95,399.45 974.13,379.23 975.20,377.10C976.27,374.97 977.33,392.33 978.40,397.30C979.47,402.27 980.53,405.47 981.60,406.90C982.67,408.33 983.92,405.90 984.80,405.90C985.68,405.90 986.20,409.03 986.90,406.90C987.60,404.77 988.28,394.70 989.00,393.10C989.72,391.50 990.42,401.92 991.20,397.30C991.98,392.68 992.88,366.10 993.70,365.40C994.52,364.70 995.10,387.25 996.10,393.10C997.10,398.95 998.40,396.60 999.70,400.50C1001.00,404.40 1002.55,419.33 1003.90,416.50C1005.25,413.67 1006.67,389.25 1007.80,383.50C1008.93,377.75 1009.75,381.47 1010.70,382.00C1011.65,382.53 1012.32,382.55 1013.50,386.70C1014.68,390.85 1016.38,401.40 1017.80,406.90C1019.22,412.40 1020.77,420.77 1022.00,419.70C1023.23,418.63 1024.23,403.17 1025.20,400.50C1026.17,397.83 1026.92,405.12 1027.80,403.70C1028.68,402.28 1029.85,393.60 1030.50,392.00C1031.15,390.40 1031.07,389.67 1031.70,394.10C1032.33,398.53 1033.52,412.92 1034.30,418.60C1035.08,424.28 1035.52,426.42 1036.40,428.20C1037.28,429.98 1038.53,429.48 1039.60,429.30C1040.67,429.12 1041.73,426.40 1042.80,427.10C1043.87,427.80 1045.02,431.18 1046.00,433.50C1046.98,435.82 1047.72,445.08 1048.70,441.00C1049.68,436.92 1050.93,412.02 1051.90,409.00C1052.87,405.98 1053.72,421.30 1054.50,422.90C1055.28,424.50 1055.90,418.07 1056.60,418.60C1057.30,419.13 1057.75,429.12 1058.70,426.10C1059.65,423.08 1060.98,401.92 1062.30,400.50C1063.62,399.08 1065.35,416.53 1066.60,417.60C1067.85,418.67 1068.80,407.27 1069.80,406.90C1070.80,406.53 1071.72,412.92 1072.60,415.40C1073.48,417.88 1074.33,421.97 1075.10,421.80C1075.87,421.63 1076.28,414.93 1077.20,414.40C1078.12,413.87 1079.60,420.38 1080.60,418.60C1081.60,416.82 1082.23,405.12 1083.20,403.70C1084.17,402.28 1085.17,407.78 1086.40,410.10C1087.63,412.42 1089.37,417.95 1090.60,417.60C1091.83,417.25 1092.83,408.18 1093.80,408.00C1094.77,407.82 1095.52,411.18 1096.40,416.50C1097.28,421.82 1098.22,447.35 1099.10,439.90C1099.98,432.45 1100.80,374.10 1101.70,371.80C1102.60,369.50 1103.52,422.02 1104.50,426.10C1105.48,430.18 1106.63,397.37 1107.60,396.30C1108.57,395.23 1109.32,415.80 1110.30,419.70C1111.28,423.60 1112.43,421.83 1113.50,419.70C1114.57,417.57 1115.70,406.55 1116.70,406.90C1117.70,407.25 1118.50,424.45 1119.50,421.80C1120.50,419.15 1121.75,391.18 1122.70,391.00C1123.65,390.82 1124.25,418.05 1125.20,420.70C1126.15,423.35 1127.23,406.00 1128.40,406.90C1129.57,407.80 1130.85,426.80 1132.20,426.10C1133.55,425.40 1135.28,403.42 1136.50,402.70C1137.72,401.98 1138.37,422.17 1139.50,421.80C1140.63,421.43 1141.78,399.78 1143.30,400.50C1144.82,401.22 1147.18,424.68 1148.60,426.10C1150.02,427.52 1150.73,412.02 1151.80,409.00C1152.87,405.98 1153.65,406.40 1155.00,408.00C1156.35,409.60 1158.58,418.07 1159.90,418.60C1161.22,419.13 1161.67,413.68 1162.90,411.20C1164.13,408.72 1166.13,402.12 1167.30,403.70C1168.47,405.28 1168.93,413.43 1169.90,420.70C1170.87,427.97 1172.03,446.58 1173.10,447.30C1174.17,448.02 1175.42,430.48 1176.30,425.00C1177.18,419.52 1178.05,416.17 1178.40,414.40" fill="none" stroke="#e06666" stroke-width="1.25" stroke-linejoin="round"/><line x1="933" y1="315.7" x2="938" y2="315.7" stroke="#6aa84f" stroke-width="1.4"/><text x="942" y="317.8" font-size="6.0" fill="#222" style="font-family:'Liberation Sans',sans-serif">Заказанные товары</text><line x1="1008" y1="315.7" x2="1013" y2="315.7" stroke="#e06666" stroke-width="1.4"/><text x="1018" y="317.8" font-size="6.0" fill="#222" style="font-family:'Liberation Sans',sans-serif">Затраты</text><text transform="translate(778.60,455.20) rotate(-62)" text-anchor="end" font-size="6.0" fill="#222" stroke="#222" stroke-width="0.12" style="font-family:'Liberation Sans',sans-serif">01.04.2022</text><text transform="translate(786.55,455.20) rotate(-62)" text-anchor="end" font-size="6.0" fill="#222" stroke="#222" stroke-width="0.12" style="font-family:'Liberation Sans',sans-serif">04.04.2022</text><text transform="translate(794.51,455.20) rotate(-62)" text-anchor="end" font-size="6.0" fill="#222" stroke="#222" stroke-width="0.12" style="font-family:'Liberation Sans',sans-serif">07.04.2022</text><text transform="translate(802.46,455.20) rotate(-62)" text-anchor="end" font-size="6.0" fill="#222" stroke="#222" stroke-width="0.12" style="font-family:'Liberation Sans',sans-serif">10.04.2022</text><text transform="translate(810.41,455.20) rotate(-62)" text-anchor="end" font-size="6.0" fill="#222" stroke="#222" stroke-width="0.12" style="font-family:'Liberation Sans',sans-serif">13.04.2022</text><text transform="translate(818.37,455.20) rotate(-62)" text-anchor="end" font-size="6.0" fill="#222" stroke="#222" stroke-width="0.12" style="font-family:'Liberation Sans',sans-serif">16.04.2022</text><text transform="translate(826.32,455.20) rotate(-62)" text-anchor="end" font-size="6.0" fill="#222" stroke="#222" stroke-width="0.12" style="font-family:'Liberation Sans',sans-serif">19.04.2022</text><text transform="translate(834.27,455.20) rotate(-62)" text-anchor="end" font-size="6.0" fill="#222" stroke="#222" stroke-width="0.12" style="font-family:'Liberation Sans',sans-serif">22.04.2022</text><text transform="translate(842.22,455.20) rotate(-62)" text-anchor="end" font-size="6.0" fill="#222" stroke="#222" stroke-width="0.12" style="font-family:'Liberation Sans',sans-serif">25.04.2022</text><text transform="translate(850.18,455.20) rotate(-62)" text-anchor="end" font-size="6.0" fill="#222" stroke="#222" stroke-width="0.12" style="font-family:'Liberation Sans',sans-serif">28.04.2022</text><text transform="translate(858.13,455.20) rotate(-62)" text-anchor="end" font-size="6.0" fill="#222" stroke="#222" stroke-width="0.12" style="font-family:'Liberation Sans',sans-serif">01.05.2022</text><text transform="translate(866.08,455.20) rotate(-62)" text-anchor="end" font-size="6.0" fill="#222" stroke="#222" stroke-width="0.12" style="font-family:'Liberation Sans',sans-serif">04.05.2022</text><text transform="translate(874.04,455.20) rotate(-62)" text-anchor="end" font-size="6.0" fill="#222" stroke="#222" stroke-width="0.12" style="font-family:'Liberation Sans',sans-serif">07.05.2022</text><text transform="translate(881.99,455.20) rotate(-62)" text-anchor="end" font-size="6.0" fill="#222" stroke="#222" stroke-width="0.12" style="font-family:'Liberation Sans',sans-serif">10.05.2022</text><text transform="translate(889.94,455.20) rotate(-62)" text-anchor="end" font-size="6.0" fill="#222" stroke="#222" stroke-width="0.12" style="font-family:'Liberation Sans',sans-serif">13.05.2022</text><text transform="translate(897.89,455.20) rotate(-62)" text-anchor="end" font-size="6.0" fill="#222" stroke="#222" stroke-width="0.12" style="font-family:'Liberation Sans',sans-serif">16.05.2022</text><text transform="translate(905.85,455.20) rotate(-62)" text-anchor="end" font-size="6.0" fill="#222" stroke="#222" stroke-width="0.12" style="font-family:'Liberation Sans',sans-serif">19.05.2022</text><text transform="translate(913.80,455.20) rotate(-62)" text-anchor="end" font-size="6.0" fill="#222" stroke="#222" stroke-width="0.12" style="font-family:'Liberation Sans',sans-serif">22.05.2022</text><text transform="translate(921.75,455.20) rotate(-62)" text-anchor="end" font-size="6.0" fill="#222" stroke="#222" stroke-width="0.12" style="font-family:'Liberation Sans',sans-serif">25.05.2022</text><text transform="translate(929.71,455.20) rotate(-62)" text-anchor="end" font-size="6.0" fill="#222" stroke="#222" stroke-width="0.12" style="font-family:'Liberation Sans',sans-serif">28.05.2022</text><text transform="translate(937.66,455.20) rotate(-62)" text-anchor="end" font-size="6.0" fill="#222" stroke="#222" stroke-width="0.12" style="font-family:'Liberation Sans',sans-serif">31.05.2022</text><text transform="translate(945.61,455.20) rotate(-62)" text-anchor="end" font-size="6.0" fill="#222" stroke="#222" stroke-width="0.12" style="font-family:'Liberation Sans',sans-serif">03.06.2022</text><text transform="translate(953.57,455.20) rotate(-62)" text-anchor="end" font-size="6.0" fill="#222" stroke="#222" stroke-width="0.12" style="font-family:'Liberation Sans',sans-serif">06.06.2022</text><text transform="translate(961.52,455.20) rotate(-62)" text-anchor="end" font-size="6.0" fill="#222" stroke="#222" stroke-width="0.12" style="font-family:'Liberation Sans',sans-serif">09.06.2022</text><text transform="translate(969.47,455.20) rotate(-62)" text-anchor="end" font-size="6.0" fill="#222" stroke="#222" stroke-width="0.12" style="font-family:'Liberation Sans',sans-serif">12.06.2022</text><text transform="translate(977.42,455.20) rotate(-62)" text-anchor="end" font-size="6.0" fill="#222" stroke="#222" stroke-width="0.12" style="font-family:'Liberation Sans',sans-serif">15.06.2022</text><text transform="translate(985.38,455.20) rotate(-62)" text-anchor="end" font-size="6.0" fill="#222" stroke="#222" stroke-width="0.12" style="font-family:'Liberation Sans',sans-serif">18.06.2022</text><text transform="translate(993.33,455.20) rotate(-62)" text-anchor="end" font-size="6.0" fill="#222" stroke="#222" stroke-width="0.12" style="font-family:'Liberation Sans',sans-serif">21.06.2022</text><text transform="translate(1001.28,455.20) rotate(-62)" text-anchor="end" font-size="6.0" fill="#222" stroke="#222" stroke-width="0.12" style="font-family:'Liberation Sans',sans-serif">24.06.2022</text><text transform="translate(1009.24,455.20) rotate(-62)" text-anchor="end" font-size="6.0" fill="#222" stroke="#222" stroke-width="0.12" style="font-family:'Liberation Sans',sans-serif">27.06.2022</text><text transform="translate(1017.19,455.20) rotate(-62)" text-anchor="end" font-size="6.0" fill="#222" stroke="#222" stroke-width="0.12" style="font-family:'Liberation Sans',sans-serif">30.06.2022</text><text transform="translate(1025.14,455.20) rotate(-62)" text-anchor="end" font-size="6.0" fill="#222" stroke="#222" stroke-width="0.12" style="font-family:'Liberation Sans',sans-serif">03.07.2022</text><text transform="translate(1033.10,455.20) rotate(-62)" text-anchor="end" font-size="6.0" fill="#222" stroke="#222" stroke-width="0.12" style="font-family:'Liberation Sans',sans-serif">06.07.2022</text><text transform="translate(1041.05,455.20) rotate(-62)" text-anchor="end" font-size="6.0" fill="#222" stroke="#222" stroke-width="0.12" style="font-family:'Liberation Sans',sans-serif">09.07.2022</text><text transform="translate(1049.00,455.20) rotate(-62)" text-anchor="end" font-size="6.0" fill="#222" stroke="#222" stroke-width="0.12" style="font-family:'Liberation Sans',sans-serif">12.07.2022</text><text transform="translate(1056.95,455.20) rotate(-62)" text-anchor="end" font-size="6.0" fill="#222" stroke="#222" stroke-width="0.12" style="font-family:'Liberation Sans',sans-serif">15.07.2022</text><text transform="translate(1064.91,455.20) rotate(-62)" text-anchor="end" font-size="6.0" fill="#222" stroke="#222" stroke-width="0.12" style="font-family:'Liberation Sans',sans-serif">18.07.2022</text><text transform="translate(1072.86,455.20) rotate(-62)" text-anchor="end" font-size="6.0" fill="#222" stroke="#222" stroke-width="0.12" style="font-family:'Liberation Sans',sans-serif">21.07.2022</text><text transform="translate(1080.81,455.20) rotate(-62)" text-anchor="end" font-size="6.0" fill="#222" stroke="#222" stroke-width="0.12" style="font-family:'Liberation Sans',sans-serif">24.07.2022</text><text transform="translate(1088.77,455.20) rotate(-62)" text-anchor="end" font-size="6.0" fill="#222" stroke="#222" stroke-width="0.12" style="font-family:'Liberation Sans',sans-serif">27.07.2022</text><text transform="translate(1096.72,455.20) rotate(-62)" text-anchor="end" font-size="6.0" fill="#222" stroke="#222" stroke-width="0.12" style="font-family:'Liberation Sans',sans-serif">30.07.2022</text><text transform="translate(1104.67,455.20) rotate(-62)" text-anchor="end" font-size="6.0" fill="#222" stroke="#222" stroke-width="0.12" style="font-family:'Liberation Sans',sans-serif">02.08.2022</text><text transform="translate(1112.63,455.20) rotate(-62)" text-anchor="end" font-size="6.0" fill="#222" stroke="#222" stroke-width="0.12" style="font-family:'Liberation Sans',sans-serif">05.08.2022</text><text transform="translate(1120.58,455.20) rotate(-62)" text-anchor="end" font-size="6.0" fill="#222" stroke="#222" stroke-width="0.12" style="font-family:'Liberation Sans',sans-serif">08.08.2022</text><text transform="translate(1128.53,455.20) rotate(-62)" text-anchor="end" font-size="6.0" fill="#222" stroke="#222" stroke-width="0.12" style="font-family:'Liberation Sans',sans-serif">11.08.2022</text><text transform="translate(1136.49,455.20) rotate(-62)" text-anchor="end" font-size="6.0" fill="#222" stroke="#222" stroke-width="0.12" style="font-family:'Liberation Sans',sans-serif">14.08.2022</text><text transform="translate(1144.44,455.20) rotate(-62)" text-anchor="end" font-size="6.0" fill="#222" stroke="#222" stroke-width="0.12" style="font-family:'Liberation Sans',sans-serif">17.08.2022</text><text transform="translate(1152.39,455.20) rotate(-62)" text-anchor="end" font-size="6.0" fill="#222" stroke="#222" stroke-width="0.12" style="font-family:'Liberation Sans',sans-serif">20.08.2022</text><text transform="translate(1160.34,455.20) rotate(-62)" text-anchor="end" font-size="6.0" fill="#222" stroke="#222" stroke-width="0.12" style="font-family:'Liberation Sans',sans-serif">23.08.2022</text><text transform="translate(1168.30,455.20) rotate(-62)" text-anchor="end" font-size="6.0" fill="#222" stroke="#222" stroke-width="0.12" style="font-family:'Liberation Sans',sans-serif">26.08.2022</text><text transform="translate(1176.25,455.20) rotate(-62)" text-anchor="end" font-size="6.0" fill="#222" stroke="#222" stroke-width="0.12" style="font-family:'Liberation Sans',sans-serif">29.08.2022</text><text x="977" y="495" text-anchor="middle" font-size="6.8" fill="#222" stroke="#222" stroke-width="0.2" style="font-family:'Liberation Sans',sans-serif">Дата</text><text x="745.5" y="532.8" font-size="9.9" letter-spacing="0.2" fill="#595959" style="font-family:'Liberation Sans',sans-serif">Клики по рекламе и переходы в маркетплейсы в разрезе по дням</text><line x1="779.3" y1="582.5" x2="1201" y2="582.5" stroke="#d9d9d9" stroke-width="0.9"/><line x1="776.9" y1="582.5" x2="782.9" y2="582.5" stroke="#333" stroke-width="0.9"/><line x1="779.3" y1="558.3" x2="779.3" y2="601.6" stroke="#333" stroke-width="1"/><path d="M781.00,679.30C781.46,679.30 782.84,679.30 783.76,679.30C784.68,679.30 785.60,679.30 786.52,679.30C787.44,679.30 788.35,679.30 789.27,679.30C790.19,679.30 791.11,679.30 792.03,679.30C792.95,679.30 793.87,679.30 794.79,679.30C795.71,679.30 796.63,679.30 797.55,679.30C798.47,679.30 799.39,679.30 800.31,679.30C801.23,679.30 802.14,679.30 803.06,679.30C803.98,679.30 804.90,679.30 805.82,679.30C806.74,679.30 807.66,679.37 808.58,679.30C809.50,679.23 810.42,680.12 811.34,678.90C812.26,677.67 813.18,673.44 814.10,671.94C815.02,670.45 815.93,670.38 816.85,669.93C817.77,669.47 818.69,668.45 819.61,669.22C820.53,669.99 821.45,674.38 822.37,674.56C823.29,674.75 824.21,672.75 825.13,670.33C826.05,667.91 826.97,661.81 827.89,660.05C828.81,658.28 829.72,659.11 830.64,659.74C831.56,660.38 832.48,663.22 833.40,663.88C834.32,664.53 835.24,663.24 836.16,663.68C837.08,664.11 838.00,666.38 838.92,666.50C839.84,666.62 840.76,664.26 841.68,664.38C842.60,664.50 843.51,667.24 844.43,667.20C845.35,667.17 846.27,664.80 847.19,664.18C848.11,663.56 849.03,663.46 849.95,663.47C850.87,663.49 851.79,664.78 852.71,664.28C853.63,663.78 854.55,660.60 855.47,660.45C856.39,660.30 857.30,662.25 858.22,663.37C859.14,664.50 860.06,666.75 860.98,667.20C861.90,667.66 862.82,667.00 863.74,666.10C864.66,665.19 865.58,661.41 866.50,661.76C867.42,662.11 868.34,667.79 869.26,668.21C870.18,668.63 871.09,664.60 872.01,664.28C872.93,663.96 873.85,666.67 874.77,666.30C875.69,665.93 876.61,662.33 877.53,662.06C878.45,661.79 879.37,664.89 880.29,664.68C881.21,664.48 882.13,661.66 883.05,660.85C883.97,660.05 884.88,663.05 885.80,659.85C886.72,656.64 887.64,650.79 888.56,641.60C889.48,632.41 890.40,606.19 891.32,604.71C892.24,603.23 893.16,627.61 894.08,632.73C895.00,637.85 895.92,633.20 896.84,635.45C897.76,637.70 898.67,645.20 899.59,646.24C900.51,647.28 901.43,644.02 902.35,641.70C903.27,639.38 904.19,633.70 905.11,632.33C906.03,630.95 906.90,633.39 907.87,633.44C908.83,633.48 909.88,632.37 910.90,632.60C911.92,632.83 912.77,633.75 914.00,634.80C915.23,635.85 917.13,636.43 918.30,638.90C919.47,641.37 920.12,654.90 921.00,649.60C921.88,644.30 922.82,616.32 923.60,607.10C924.38,597.88 924.63,592.70 925.70,594.30C926.77,595.90 928.75,614.03 930.00,616.70C931.25,619.37 932.32,611.90 933.20,610.30C934.08,608.70 934.42,609.58 935.30,607.10C936.18,604.62 937.62,593.98 938.50,595.40C939.38,596.82 939.72,617.37 940.60,615.60C941.48,613.83 942.57,584.98 943.80,584.80C945.03,584.62 946.65,616.28 948.00,614.50C949.35,612.72 950.73,573.92 951.90,574.10C953.07,574.28 954.05,607.63 955.00,615.60C955.95,623.57 956.72,624.02 957.60,621.90C958.48,619.78 959.38,609.45 960.30,602.90C961.22,596.35 962.22,580.48 963.10,582.60C963.98,584.72 964.82,609.75 965.60,615.60C966.38,621.45 967.02,617.70 967.80,617.70C968.58,617.70 969.35,620.38 970.30,615.60C971.25,610.82 972.68,589.35 973.50,589.00C974.32,588.65 974.73,600.20 975.20,613.50C975.67,626.80 975.70,658.70 976.30,668.80C976.90,678.90 977.92,673.92 978.80,674.10C979.68,674.28 980.60,675.03 981.60,669.90C982.60,664.77 983.73,652.88 984.80,643.30C985.87,633.72 987.02,613.30 988.00,612.40C988.98,611.50 989.82,634.17 990.70,637.90C991.58,641.63 992.33,637.10 993.30,634.80C994.27,632.50 995.27,626.95 996.50,624.10C997.73,621.25 999.47,617.88 1000.70,617.70C1001.93,617.52 1002.65,624.23 1003.90,623.00C1005.15,621.77 1006.78,610.12 1008.20,610.30C1009.62,610.48 1010.98,619.50 1012.40,624.10C1013.82,628.70 1015.45,637.90 1016.70,637.90C1017.95,637.90 1018.48,628.35 1019.90,624.10C1021.32,619.85 1023.78,613.10 1025.20,612.40C1026.62,611.70 1027.33,616.70 1028.40,619.90C1029.47,623.10 1030.62,630.02 1031.60,631.60C1032.58,633.18 1033.50,630.30 1034.30,629.40C1035.10,628.50 1035.77,626.02 1036.40,626.20C1037.03,626.38 1037.57,635.82 1038.10,630.50C1038.63,625.18 1039.00,596.43 1039.60,594.30C1040.20,592.17 1041.10,609.53 1041.70,617.70C1042.30,625.87 1042.57,646.67 1043.20,643.30C1043.83,639.93 1044.68,600.70 1045.50,597.50C1046.32,594.30 1047.20,614.70 1048.10,624.10C1049.00,633.50 1050.02,651.07 1050.90,653.90C1051.78,656.73 1052.52,644.72 1053.40,641.10C1054.28,637.48 1055.32,630.78 1056.20,632.20C1057.08,633.62 1057.75,645.82 1058.70,649.60C1059.65,653.38 1061.02,651.35 1061.90,654.90C1062.78,658.45 1063.28,670.00 1064.00,670.90C1064.72,671.80 1065.48,663.30 1066.20,660.30C1066.92,657.30 1067.60,652.20 1068.30,652.90C1069.00,653.60 1069.52,663.98 1070.40,664.50C1071.28,665.02 1072.72,657.05 1073.60,656.00C1074.48,654.95 1074.88,659.62 1075.70,658.20C1076.52,656.78 1077.43,647.87 1078.50,647.50C1079.57,647.13 1081.03,654.22 1082.10,656.00C1083.17,657.78 1084.02,658.83 1084.90,658.20C1085.78,657.57 1086.45,652.03 1087.40,652.20C1088.35,652.37 1089.53,658.75 1090.60,659.20C1091.67,659.65 1092.73,654.55 1093.80,654.90C1094.87,655.25 1095.93,662.18 1097.00,661.30C1098.07,660.42 1099.13,651.00 1100.20,649.60C1101.27,648.20 1102.17,651.12 1103.40,652.90C1104.63,654.68 1106.45,660.13 1107.60,660.30C1108.75,660.47 1109.38,655.68 1110.30,653.90C1111.22,652.12 1112.28,646.93 1113.10,649.60C1113.92,652.27 1114.50,667.42 1115.20,669.90C1115.90,672.38 1116.58,670.00 1117.30,664.50C1118.02,659.00 1118.78,636.90 1119.50,636.90C1120.22,636.90 1120.90,659.72 1121.60,664.50C1122.30,669.28 1123.03,667.90 1123.70,665.60C1124.37,663.30 1124.82,652.30 1125.60,650.70C1126.38,649.10 1127.40,655.47 1128.40,656.00C1129.40,656.53 1130.35,654.60 1131.60,653.90C1132.85,653.20 1134.73,650.38 1135.90,651.80C1137.07,653.22 1137.55,663.82 1138.60,662.40C1139.65,660.98 1141.23,643.30 1142.20,643.30C1143.17,643.30 1143.50,661.17 1144.40,662.40C1145.30,663.63 1146.55,652.83 1147.60,650.70C1148.65,648.57 1149.82,649.07 1150.70,649.60C1151.58,650.13 1152.00,654.78 1152.90,653.90C1153.80,653.02 1155.22,644.30 1156.10,644.30C1156.98,644.30 1157.15,654.78 1158.20,653.90C1159.25,653.02 1161.17,640.42 1162.40,639.00C1163.63,637.58 1164.53,642.92 1165.60,645.40C1166.67,647.88 1167.62,654.08 1168.80,653.90C1169.98,653.72 1171.63,645.02 1172.70,644.30C1173.77,643.58 1174.32,649.07 1175.20,649.60C1176.08,650.13 1177.00,646.78 1178.00,647.50C1179.00,648.22 1180.07,653.12 1181.20,653.90C1182.33,654.68 1183.60,652.73 1184.80,652.20C1186.00,651.67 1187.33,650.07 1188.40,650.70C1189.47,651.33 1190.20,651.92 1191.20,656.00C1192.20,660.08 1193.52,672.37 1194.40,675.20C1195.28,678.03 1195.80,675.83 1196.50,673.00C1197.20,670.17 1198.07,661.03 1198.60,658.20C1199.13,655.37 1199.52,656.37 1199.70,656.00" fill="none" stroke="#e06666" stroke-width="1.25" stroke-linejoin="round" clip-path="url(#c3)"/><path d="M1072.00,679.30C1072.77,671.80 1075.48,649.23 1076.60,634.30C1077.72,619.37 1078.00,589.70 1078.70,589.70C1079.40,589.70 1079.75,619.37 1080.80,634.30C1081.85,649.23 1084.30,671.80 1085.00,679.30" fill="none" stroke="#6aa84f" stroke-width="1.25" stroke-linejoin="round" clip-path="url(#c3)"/><path d="M1094.00,679.30C1094.75,671.80 1097.40,651.33 1098.50,634.30C1099.60,617.27 1099.90,577.10 1100.60,577.10C1101.30,577.10 1101.63,617.27 1102.70,634.30C1103.77,651.33 1106.28,671.80 1107.00,679.30" fill="none" stroke="#6aa84f" stroke-width="1.25" stroke-linejoin="round" clip-path="url(#c3)"/><path d="M1113.00,679.30C1113.80,671.80 1116.65,651.18 1117.80,634.30C1118.95,617.42 1119.20,578.00 1119.90,578.00C1120.60,578.00 1120.98,617.42 1122.00,634.30C1123.02,651.18 1125.33,671.80 1126.00,679.30" fill="none" stroke="#6aa84f" stroke-width="1.25" stroke-linejoin="round" clip-path="url(#c3)"/><path d="M1130.00,679.30C1130.73,671.80 1133.33,649.88 1134.40,634.30C1135.47,618.72 1135.70,585.80 1136.40,585.80C1137.10,585.80 1137.95,620.38 1138.60,634.30C1139.25,648.22 1139.63,680.77 1140.30,669.30C1140.97,657.83 1141.85,571.33 1142.60,565.50C1143.35,559.67 1143.73,615.33 1144.80,634.30C1145.87,653.27 1148.30,671.80 1149.00,679.30" fill="none" stroke="#6aa84f" stroke-width="1.25" stroke-linejoin="round" clip-path="url(#c3)"/><path d="M1144.00,679.30C1144.72,671.80 1147.22,650.52 1148.30,634.30C1149.38,618.08 1149.75,590.13 1150.50,582.00C1151.25,573.87 1151.93,585.35 1152.80,585.50C1153.67,585.65 1154.87,574.77 1155.70,582.90C1156.53,591.03 1156.75,618.23 1157.80,634.30C1158.85,650.37 1161.30,671.80 1162.00,679.30" fill="none" stroke="#6aa84f" stroke-width="1.25" stroke-linejoin="round" clip-path="url(#c3)"/><path d="M1156.00,679.30C1156.58,674.30 1158.58,662.85 1159.50,649.30C1160.42,635.75 1160.83,598.00 1161.50,598.00C1162.17,598.00 1162.58,635.75 1163.50,649.30C1164.42,662.85 1166.42,674.30 1167.00,679.30" fill="none" stroke="#6aa84f" stroke-width="1.25" stroke-linejoin="round" clip-path="url(#c3)"/><path d="M1166.00,679.30C1166.77,671.80 1169.48,651.82 1170.60,634.30C1171.72,616.78 1172.00,574.20 1172.70,574.20C1173.40,574.20 1173.75,616.78 1174.80,634.30C1175.85,651.82 1178.30,671.80 1179.00,679.30" fill="none" stroke="#6aa84f" stroke-width="1.25" stroke-linejoin="round" clip-path="url(#c3)"/><path d="M1178.00,679.30C1178.87,671.80 1181.85,649.23 1183.20,634.30C1184.55,619.37 1185.05,596.08 1186.10,589.70C1187.15,583.32 1188.43,593.78 1189.50,596.00C1190.57,598.22 1191.25,589.12 1192.50,603.00C1193.75,616.88 1196.25,666.58 1197.00,679.30" fill="none" stroke="#6aa84f" stroke-width="1.25" stroke-linejoin="round" clip-path="url(#c3)"/><line x1="926" y1="544" x2="931" y2="544" stroke="#e06666" stroke-width="1.4"/><text x="935" y="546.1" font-size="6.0" fill="#222" style="font-family:'Liberation Sans',sans-serif">Клики</text><line x1="962" y1="544" x2="967" y2="544" stroke="#6aa84f" stroke-width="1.4"/><text x="971" y="546.1" font-size="6.0" fill="#222" style="font-family:'Liberation Sans',sans-serif">Переходы в маркетплейсы</text><rect x="0" y="601.6" width="1240" height="10" fill="#fff"/></svg>
</div></body></html>
